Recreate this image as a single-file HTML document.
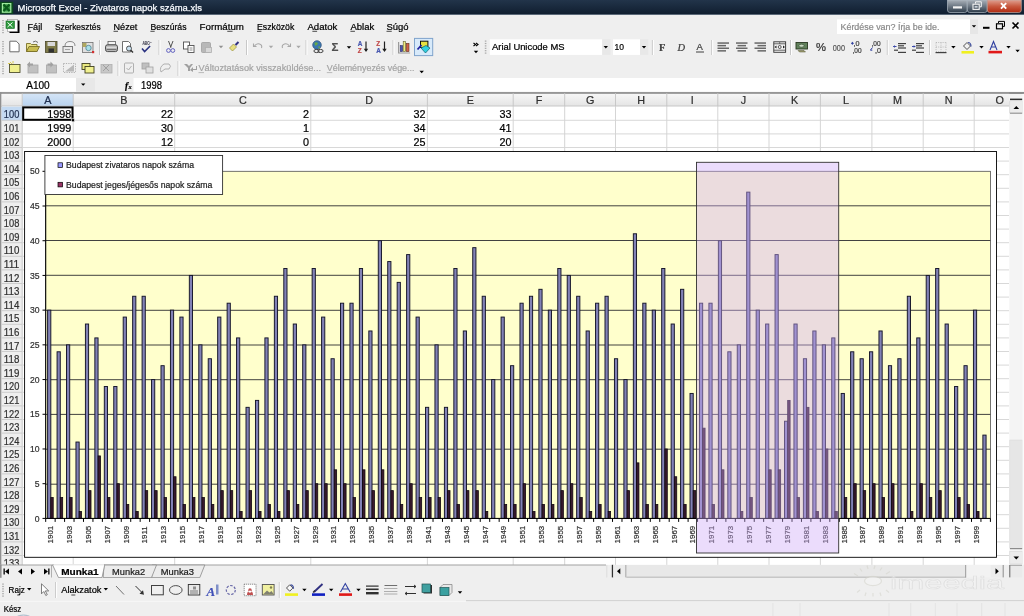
<!DOCTYPE html>
<html><head><meta charset="utf-8">
<style>
*{margin:0;padding:0;box-sizing:border-box}
html,body{width:1024px;height:616px;overflow:hidden;background:#efefef;font-family:"Liberation Sans", sans-serif;}
</style></head><body>
<svg width="1024" height="616" style="position:absolute;left:0;top:0;will-change:transform" font-family="Liberation Sans, sans-serif">
<defs><linearGradient id="tb" x1="0" y1="0" x2="0" y2="1"><stop offset="0" stop-color="#22344a"/><stop offset="1" stop-color="#0f1d2e"/></linearGradient><linearGradient id="wb" x1="0" y1="0" x2="0" y2="1"><stop offset="0" stop-color="#a9b0b8"/><stop offset="0.5" stop-color="#6d7884"/><stop offset="1" stop-color="#2c3a48"/></linearGradient><linearGradient id="wc" x1="0" y1="0" x2="0" y2="1"><stop offset="0" stop-color="#e0a090"/><stop offset="0.5" stop-color="#c85a40"/><stop offset="1" stop-color="#b02a10"/></linearGradient></defs>
<rect x="0" y="0" width="1024" height="15" fill="url(#tb)" />
<rect x="0" y="14" width="1024" height="1" fill="#5a6878" />
<rect x="0" y="1.8" width="13.2" height="12" fill="#0a4a1c" />
<rect x="1.8" y="3" width="9.6" height="9.8" fill="#a0eca0" />
<rect x="3" y="4.2" width="7.2" height="7.4" fill="#3a9a48" />
<path d="M3.5,4.5 L9.5,11 M9.5,4.5 L3.5,11" fill="none" stroke="#0a5a1a" stroke-width="2.2" />
<text x="17.5" y="11.1" font-size="9.6" fill="#f8fbff" textLength="184.5" lengthAdjust="spacingAndGlyphs" stroke="#f8fbff" stroke-width="0.25">Microsoft Excel - Zivataros napok száma.xls</text>
<path d="M947.5,0 h19.7 v10 q0,2.5 -2.5,2.5 h-14.7 q-2.5,0 -2.5,-2.5 z" fill="url(#wb)" stroke="#b0bac4" stroke-width="0.7" />
<path d="M967.3,0 h19.9 v10 q0,2.5 -2.5,2.5 h-14.9 q-2.5,0 -2.5,-2.5 z" fill="url(#wb)" stroke="#b0bac4" stroke-width="0.7" />
<path d="M987.3,0 h34 v10 q0,2.5 -2.5,2.5 h-29 q-2.5,0 -2.5,-2.5 z" fill="url(#wc)" stroke="#c0a8a0" stroke-width="0.7" />
<rect x="953" y="6.3" width="9" height="2.2" fill="#f4f4f4" />
<path d="M975.5,3.6 v-1.8 h5.8 v5 h-1.6" fill="none" stroke="#f4f4f4" stroke-width="1" />
<rect x="973" y="4.2" width="6.2" height="5.2" fill="#5a6470" stroke="#f4f4f4" stroke-width="1.1" />
<rect x="974.6" y="5.9" width="3" height="1.8" fill="#c8d0d8" />
<path d="M1001,3.2 l5.2,5.4 M1006.2,3.2 l-5.2,5.4" fill="none" stroke="#fff" stroke-width="1.9" />
<rect x="0" y="15" width="1024" height="63" fill="#efefef" />
<rect x="2.2" y="20" width="1.6" height="1.2" fill="#a8a8a8" /><rect x="2.2" y="22.4" width="1.6" height="1.2" fill="#a8a8a8" /><rect x="2.2" y="24.799999999999997" width="1.6" height="1.2" fill="#a8a8a8" /><rect x="2.2" y="27.199999999999996" width="1.6" height="1.2" fill="#a8a8a8" /><rect x="2.2" y="29.599999999999994" width="1.6" height="1.2" fill="#a8a8a8" /><rect x="2.2" y="31.999999999999993" width="1.6" height="1.2" fill="#a8a8a8" />
<rect x="9.5" y="20.5" width="10" height="12.5" fill="#000" />
<rect x="7.5" y="19.5" width="10" height="12" fill="#fff" stroke="#909090" stroke-width="0.6" />
<rect x="6" y="21" width="8.5" height="7.5" fill="#2d9a3c" stroke="#1a6a28" stroke-width="0.6" />
<path d="M7.5,22.5 l5,4.5 M12.5,22.5 l-5,4.5" fill="none" stroke="#fff" stroke-width="1" />
<text x="27.5" y="29.8" font-size="9.4" fill="#000" textLength="14.7" lengthAdjust="spacingAndGlyphs"  stroke="#000" stroke-width="0.22">Fájl</text>
<line x1="27.5" y1="31.3" x2="30.99125" y2="31.3" stroke="#000" stroke-width="0.7" />
<text x="54.9" y="29.8" font-size="9.4" fill="#000" textLength="45.7" lengthAdjust="spacingAndGlyphs"  stroke="#000" stroke-width="0.22">Szerkesztés</text>
<line x1="59.054545454545455" y1="31.3" x2="63.001363636363635" y2="31.3" stroke="#000" stroke-width="0.7" />
<text x="113.5" y="29.8" font-size="9.4" fill="#000" textLength="23.8" lengthAdjust="spacingAndGlyphs"  stroke="#000" stroke-width="0.22">Nézet</text>
<line x1="113.5" y1="31.3" x2="118.022" y2="31.3" stroke="#000" stroke-width="0.7" />
<text x="150.4" y="29.8" font-size="9.4" fill="#000" textLength="36.1" lengthAdjust="spacingAndGlyphs"  stroke="#000" stroke-width="0.22">Beszúrás</text>
<line x1="150.4" y1="31.3" x2="154.68687500000001" y2="31.3" stroke="#000" stroke-width="0.7" />
<text x="199.6" y="29.8" font-size="9.4" fill="#000" textLength="44.3" lengthAdjust="spacingAndGlyphs"  stroke="#000" stroke-width="0.22">Formátum</text>
<line x1="227.2875" y1="31.3" x2="232.548125" y2="31.3" stroke="#000" stroke-width="0.7" />
<text x="257" y="29.8" font-size="9.4" fill="#000" textLength="37.3" lengthAdjust="spacingAndGlyphs"  stroke="#000" stroke-width="0.22">Eszközök</text>
<line x1="257.0" y1="31.3" x2="261.429375" y2="31.3" stroke="#000" stroke-width="0.7" />
<text x="307.4" y="29.8" font-size="9.4" fill="#000" textLength="29.9" lengthAdjust="spacingAndGlyphs"  stroke="#000" stroke-width="0.22">Adatok</text>
<line x1="312.3833333333333" y1="31.3" x2="317.1175" y2="31.3" stroke="#000" stroke-width="0.7" />
<text x="350.4" y="29.8" font-size="9.4" fill="#000" textLength="23.8" lengthAdjust="spacingAndGlyphs"  stroke="#000" stroke-width="0.22">Ablak</text>
<line x1="350.4" y1="31.3" x2="354.92199999999997" y2="31.3" stroke="#000" stroke-width="0.7" />
<text x="386.5" y="29.8" font-size="9.4" fill="#000" textLength="22.1" lengthAdjust="spacingAndGlyphs"  stroke="#000" stroke-width="0.22">Súgó</text>
<line x1="386.5" y1="31.3" x2="391.74875000000003" y2="31.3" stroke="#000" stroke-width="0.7" />
<rect x="837" y="19.4" width="133" height="14.6" fill="#fff" />
<rect x="970" y="19.4" width="8" height="14.6" fill="#e6e6e6" />
<path d="M971.8,25.2 h4.4 l-2.2,2.4 z" fill="#000" />
<text x="840.5" y="29.5" font-size="9.2" fill="#8a8a8a" textLength="99" lengthAdjust="spacingAndGlyphs"  stroke="#8a8a8a" stroke-width="0.22">Kérdése van? Írja be ide.</text>
<rect x="983" y="26.8" width="6.5" height="2" fill="#000" />
<rect x="996.5" y="23.8" width="6" height="5" fill="none" stroke="#000" stroke-width="1.2" />
<path d="M998.5,23 v-1.6 h6 v5 h-1.6" fill="none" stroke="#000" stroke-width="1" />
<path d="M1012.5,22.5 l6,6 M1018.5,22.5 l-6,6" fill="none" stroke="#000" stroke-width="1.6" />
<rect x="2.2" y="41" width="1.6" height="1.2" fill="#a8a8a8" /><rect x="2.2" y="43.4" width="1.6" height="1.2" fill="#a8a8a8" /><rect x="2.2" y="45.8" width="1.6" height="1.2" fill="#a8a8a8" /><rect x="2.2" y="48.199999999999996" width="1.6" height="1.2" fill="#a8a8a8" /><rect x="2.2" y="50.599999999999994" width="1.6" height="1.2" fill="#a8a8a8" /><rect x="2.2" y="52.99999999999999" width="1.6" height="1.2" fill="#a8a8a8" />
<path d="M9.8,41.2 h6.5 l2.8,2.8 v7.8 h-9.3 z" fill="#fff" stroke="#6a6a6a" stroke-width="1" />
<path d="M26.5,43.5 h4 l1,1 h5.5 v7 h-10.5 z" fill="#e8e08a" stroke="#7a7028" stroke-width="0.9" />
<path d="M26.5,51.5 l2.5,-5 h10.5 l-2.5,5 z" fill="#c8bc50" stroke="#7a7028" stroke-width="0.9" />
<path d="M33,42 q2.5,-2 5,0.5" fill="none" stroke="#606060" stroke-width="0.9" />
<rect x="45.5" y="41.5" width="11.5" height="11" fill="#7e7a48" stroke="#4a4828" stroke-width="0.8" />
<rect x="47.5" y="42" width="7.5" height="4" fill="#d8d8d8" />
<rect x="48.5" y="48.5" width="5.5" height="4" fill="#303030" />
<path d="M65,46 q0,-4.5 5,-4.5 q5,0 5,4.5" fill="#f4f4f4" stroke="#808080" stroke-width="0.9" />
<rect x="63" y="46.5" width="9.5" height="6" fill="#e8e8e8" stroke="#707070" stroke-width="0.9" />
<line x1="65" y1="49.5" x2="70" y2="49.5" stroke="#909090" stroke-width="0.8" />
<rect x="82.5" y="42.5" width="10.5" height="10" fill="#e0e0e0" stroke="#707070" stroke-width="0.8" />
<rect x="82.5" y="43" width="4" height="4" fill="#b0a860" />
<path d="M88.5,48 m-2.7,0 a2.7,2.7 0 1,0 5.4,0 a2.7,2.7 0 1,0 -5.4,0" fill="#a8e0e8" stroke="#5a8a98" stroke-width="0.9" />
<rect x="92" y="51" width="2.2" height="2.2" fill="#d03030" />
<line x1="99.5" y1="40" x2="99.5" y2="55" stroke="#c8c8c8" stroke-width="1" /><line x1="100.5" y1="40" x2="100.5" y2="55" stroke="#ffffff" stroke-width="1" />
<rect x="108" y="41.5" width="7.5" height="3.5" fill="#f4f4f4" stroke="#606060" stroke-width="0.8" />
<rect x="105.5" y="44.8" width="12" height="6.8" fill="#b8b8b8" stroke="#404040" stroke-width="0.9" rx="2"/>
<line x1="106.5" y1="47.3" x2="116.5" y2="47.3" stroke="#f0f0f0" stroke-width="0.8" />
<line x1="106.5" y1="49.5" x2="116.5" y2="49.5" stroke="#606060" stroke-width="0.8" />
<path d="M122.5,41.5 h6 l2,2 v8.5 h-8 z" fill="#fff" stroke="#606060" stroke-width="0.9" />
<path d="M129,48.5 m-2.5,0 a2.5,2.5 0 1,0 5,0 a2.5,2.5 0 1,0 -5,0" fill="#c8e0f0" stroke="#404040" stroke-width="0.9" />
<line x1="130.8" y1="50.3" x2="133" y2="52.5" stroke="#303030" stroke-width="1.4" />
<text x="142.5" y="45.3" font-size="5.2" fill="#505060" font-weight="bold" textLength="7" lengthAdjust="spacingAndGlyphs"  stroke="#505060" stroke-width="0.22">ABC</text>
<path d="M149,43.5 q1.5,-1.5 2.5,-1" fill="none" stroke="#606070" stroke-width="0.8" />
<path d="M142,48.5 l2.6,3 l5.5,-5.5" fill="none" stroke="#283080" stroke-width="1.6" />
<line x1="159" y1="40" x2="159" y2="55" stroke="#c8c8c8" stroke-width="1" /><line x1="160" y1="40" x2="160" y2="55" stroke="#ffffff" stroke-width="1" />
<path d="M168.5,41 l2.5,6.5 M173,41 l-2.5,6.5" fill="none" stroke="#404040" stroke-width="0.9" />
<circle cx="168.5" cy="50.5" r="1.9" fill="none" stroke="#6060c0" stroke-width="1"/>
<circle cx="172.8" cy="50.5" r="1.9" fill="none" stroke="#6060c0" stroke-width="1"/>
<rect x="183.5" y="42" width="6" height="7" fill="#fff" stroke="#505050" stroke-width="0.9" />
<rect x="188" y="45.5" width="6" height="7" fill="#fff" stroke="#505050" stroke-width="0.9" />
<line x1="189.5" y1="48" x2="192.5" y2="48" stroke="#707070" stroke-width="0.8" />
<line x1="189.5" y1="50" x2="192.5" y2="50" stroke="#707070" stroke-width="0.8" />
<rect x="201.5" y="42.5" width="9" height="10" fill="#b8b8b8" stroke="#a0a0a0" stroke-width="0.8" rx="1"/>
<rect x="205.5" y="47.5" width="6" height="5" fill="#d8d8d8" stroke="#b0b0b0" stroke-width="0.8" />
<path d="M218.8,45.8 h4.4 l-2.2,2.4 z" fill="#909090" />
<path d="M229.5,48 l4,-4 l3,3 l-4,4 z" fill="#e8e080" stroke="#a09848" stroke-width="0.8" />
<path d="M235.5,45 l3,-3" fill="none" stroke="#303080" stroke-width="2" />
<line x1="246.5" y1="40" x2="246.5" y2="55" stroke="#c8c8c8" stroke-width="1" /><line x1="247.5" y1="40" x2="247.5" y2="55" stroke="#ffffff" stroke-width="1" />
<path d="M254.5,46 q2,-3 5,-2 q3,1 2,4" fill="none" stroke="#a8a8a8" stroke-width="1.1" />
<path d="M253.5,43.5 v3 h3" fill="none" stroke="#a8a8a8" stroke-width="1.1" />
<path d="M268.8,45.8 h4.4 l-2.2,2.4 z" fill="#a8a8a8" />
<path d="M289.5,46 q-2,-3 -5,-2 q-3,1 -2,4" fill="none" stroke="#a8a8a8" stroke-width="1.1" />
<path d="M290.5,43.5 v3 h-3" fill="none" stroke="#a8a8a8" stroke-width="1.1" />
<path d="M296.3,45.8 h4.4 l-2.2,2.4 z" fill="#a8a8a8" />
<line x1="306" y1="40" x2="306" y2="55" stroke="#c8c8c8" stroke-width="1" /><line x1="307" y1="40" x2="307" y2="55" stroke="#ffffff" stroke-width="1" />
<circle cx="317" cy="45" r="4.3" fill="#3a78b0" stroke="#30507a" stroke-width="0.7"/>
<path d="M314.5,43 q2,-1.5 3.5,0.5 q-0.5,2 -3,2.2 z M318.5,46 q2,0 1.5,2 l-1.5,0.5 z" fill="#68a848" />
<ellipse cx="316.5" cy="51" rx="2.6" ry="1.6" fill="none" stroke="#404040" stroke-width="1"/>
<ellipse cx="320.5" cy="51" rx="2.6" ry="1.6" fill="none" stroke="#404040" stroke-width="1"/>
<text x="331.5" y="51" font-size="11.5" fill="#505050" font-weight="bold"  stroke="#505050" stroke-width="0.22">Σ</text>
<path d="M346.8,46.3 h4.4 l-2.2,2.4 z" fill="#000" />
<text x="357.8" y="46.3" font-size="6.4" fill="#4858b0" font-weight="bold"  stroke="#4858b0" stroke-width="0.22">A</text>
<text x="357.8" y="52.8" font-size="6.4" fill="#c04848" font-weight="bold"  stroke="#c04848" stroke-width="0.22">Z</text>
<path d="M366,41.5 v9.5" fill="none" stroke="#202020" stroke-width="1.2" />
<path d="M363.8,48.8 h4.4 l-2.2,3.2 z" fill="#202020" />
<text x="376.2" y="46.3" font-size="6.4" fill="#c04848" font-weight="bold"  stroke="#c04848" stroke-width="0.22">Z</text>
<text x="376.2" y="52.8" font-size="6.4" fill="#4858b0" font-weight="bold"  stroke="#4858b0" stroke-width="0.22">A</text>
<path d="M384.5,41.5 v9.5" fill="none" stroke="#202020" stroke-width="1.2" />
<path d="M382.3,48.8 h4.4 l-2.2,3.2 z" fill="#202020" />
<line x1="393" y1="40" x2="393" y2="55" stroke="#c8c8c8" stroke-width="1" /><line x1="394" y1="40" x2="394" y2="55" stroke="#ffffff" stroke-width="1" />
<path d="M398.6,42 v11 h11.5" fill="none" stroke="#9a9a9a" stroke-width="1.2" />
<rect x="400.2" y="45.6" width="2.4" height="6" fill="#4a50b0" stroke="#303060" stroke-width="0.6" />
<rect x="403.2" y="41.6" width="2.4" height="10" fill="#f0ec80" stroke="#606030" stroke-width="0.6" />
<rect x="406.2" y="43.4" width="2.8" height="8.2" fill="#d06048" stroke="#603020" stroke-width="0.6" />
<rect x="414.5" y="38.4" width="18.2" height="17.2" fill="#d8eafa" stroke="#80a4cc" stroke-width="1" />
<rect x="420.5" y="41.2" width="7.4" height="6.3" fill="#e8e040" stroke="#101010" stroke-width="1" />
<path d="M421,48 l5,-2.5 l4,2.5 l-4.5,5 z" fill="#30d0e0" stroke="#106070" stroke-width="0.7" />
<path d="M417.5,49.5 l4,-4.5" fill="none" stroke="#2020a0" stroke-width="1.8" />
<path d="M473.5,43 l2,1.5 l-2,1.5 M476,43 l2,1.5 l-2,1.5" fill="none" stroke="#000" stroke-width="1.1" />
<path d="M473.8,50.8 h4.4 l-2.2,2.4 z" fill="#000" />
<rect x="484.8" y="40.5" width="1.6" height="1.2" fill="#a8a8a8" /><rect x="484.8" y="42.9" width="1.6" height="1.2" fill="#a8a8a8" /><rect x="484.8" y="45.3" width="1.6" height="1.2" fill="#a8a8a8" /><rect x="484.8" y="47.699999999999996" width="1.6" height="1.2" fill="#a8a8a8" /><rect x="484.8" y="50.099999999999994" width="1.6" height="1.2" fill="#a8a8a8" /><rect x="484.8" y="52.49999999999999" width="1.6" height="1.2" fill="#a8a8a8" />
<rect x="489.8" y="39.3" width="112.5" height="15.6" fill="#fff" />
<rect x="602.2" y="39.3" width="8.3" height="15.6" fill="#e8e8e8" />
<path d="M603.5999999999999,46.0 h4.4 l-2.2,2.4 z" fill="#000" />
<text x="492" y="49.8" font-size="9.3" fill="#000" textLength="72.5" lengthAdjust="spacingAndGlyphs"  stroke="#000" stroke-width="0.22">Arial Unicode MS</text>
<rect x="613" y="39.3" width="27" height="15.6" fill="#fff" />
<rect x="640" y="39.3" width="8.3" height="15.6" fill="#e8e8e8" />
<path d="M641.8,46.0 h4.4 l-2.2,2.4 z" fill="#000" />
<text x="614.5" y="49.8" font-size="9.3" fill="#000" textLength="9.5" lengthAdjust="spacingAndGlyphs"  stroke="#000" stroke-width="0.22">10</text>
<line x1="652.4" y1="40" x2="652.4" y2="55" stroke="#c8c8c8" stroke-width="1" /><line x1="653.4" y1="40" x2="653.4" y2="55" stroke="#ffffff" stroke-width="1" />
<text x="659" y="51" font-size="10.5" fill="#404040" font-weight="bold" font-family="Liberation Serif, serif" stroke="#404040" stroke-width="0.22">F</text>
<text x="677.5" y="51" font-size="10.5" fill="#404040" font-family="Liberation Serif, serif" font-style="italic" stroke="#404040" stroke-width="0.22">D</text>
<text x="696.5" y="50" font-size="9.5" fill="#404040"  stroke="#404040" stroke-width="0.22">A</text>
<line x1="696" y1="52" x2="704" y2="52" stroke="#404040" stroke-width="1" />
<line x1="711.7" y1="40" x2="711.7" y2="55" stroke="#c8c8c8" stroke-width="1" /><line x1="712.7" y1="40" x2="712.7" y2="55" stroke="#ffffff" stroke-width="1" />
<rect x="717.5" y="42.3" width="11.5" height="1.5" fill="#686868" /><rect x="717.5" y="44.9" width="8.5" height="1.5" fill="#686868" /><rect x="717.5" y="47.5" width="11.5" height="1.5" fill="#686868" /><rect x="717.5" y="50.099999999999994" width="8.5" height="1.5" fill="#686868" />
<rect x="736" y="42.3" width="11.5" height="1.5" fill="#686868" /><rect x="737.5" y="44.9" width="8.5" height="1.5" fill="#686868" /><rect x="736" y="47.5" width="11.5" height="1.5" fill="#686868" /><rect x="737.5" y="50.099999999999994" width="8.5" height="1.5" fill="#686868" />
<rect x="754.5" y="42.3" width="11.5" height="1.5" fill="#686868" /><rect x="757.5" y="44.9" width="8.5" height="1.5" fill="#686868" /><rect x="754.5" y="47.5" width="11.5" height="1.5" fill="#686868" /><rect x="757.5" y="50.099999999999994" width="8.5" height="1.5" fill="#686868" />
<rect x="773.8" y="41.8" width="11.8" height="10.5" fill="#f4f4f4" stroke="#404040" stroke-width="1" />
<line x1="773.8" y1="43.8" x2="785.6" y2="43.8" stroke="#505050" stroke-width="0.9" />
<line x1="773.8" y1="50.2" x2="785.6" y2="50.2" stroke="#505050" stroke-width="0.9" />
<line x1="779.7" y1="42" x2="779.7" y2="44" stroke="#505050" stroke-width="0.8" />
<path d="M774.5,47 l2,-1.6 v3.2 z M785,47 l-2,-1.6 v3.2 z" fill="#202020" />
<circle cx="779.7" cy="47" r="1.5" fill="none" stroke="#303030" stroke-width="0.8"/>
<line x1="790.5" y1="40" x2="790.5" y2="55" stroke="#c8c8c8" stroke-width="1" /><line x1="791.5" y1="40" x2="791.5" y2="55" stroke="#ffffff" stroke-width="1" />
<rect x="796" y="42.5" width="11.5" height="6.5" fill="#60805a" stroke="#283820" stroke-width="0.9" />
<ellipse cx="801.5" cy="45.7" rx="2.6" ry="1.5" fill="#c8d8c0" stroke="#304830" stroke-width="0.6"/>
<path d="M798,50.5 h6 l1.5,1.5 h-6 z" fill="#a0a070" stroke="#505030" stroke-width="0.5" />
<text x="816" y="51.3" font-size="11" fill="#303030" textLength="10" lengthAdjust="spacingAndGlyphs"  stroke="#303030" stroke-width="0.22">%</text>
<text x="832.8" y="51" font-size="8.6" fill="#585858" textLength="12.2" lengthAdjust="spacingAndGlyphs"  stroke="#585858" stroke-width="0.22">000</text>
<text x="853.5" y="46.3" font-size="7" fill="#404040" textLength="6" lengthAdjust="spacingAndGlyphs"  stroke="#404040" stroke-width="0.22">,0</text>
<text x="852.5" y="52.6" font-size="7" fill="#404040" textLength="9" lengthAdjust="spacingAndGlyphs"  stroke="#404040" stroke-width="0.22">,00</text>
<path d="M851,43.3 h2.8 M852.4,41.9 v2.8" fill="none" stroke="#3040a0" stroke-width="1" />
<text x="871.5" y="46.3" font-size="7" fill="#404040" textLength="9" lengthAdjust="spacingAndGlyphs"  stroke="#404040" stroke-width="0.22">,00</text>
<text x="875" y="52.6" font-size="7" fill="#404040" textLength="6" lengthAdjust="spacingAndGlyphs"  stroke="#404040" stroke-width="0.22">,0</text>
<path d="M872.5,47.5 l-2,2.5 M870.3,50.2 h2" fill="none" stroke="#3040a0" stroke-width="1" />
<line x1="887.3" y1="40" x2="887.3" y2="55" stroke="#c8c8c8" stroke-width="1" /><line x1="888.3" y1="40" x2="888.3" y2="55" stroke="#ffffff" stroke-width="1" />
<rect x="898" y="43.0" width="8" height="1.2" fill="#404040" /><rect x="898" y="45.2" width="6" height="1.2" fill="#404040" /><rect x="898" y="47.4" width="8" height="1.2" fill="#404040" /><rect x="894" y="49.6" width="4" height="1.2" fill="#404040" /><rect x="898" y="51.8" width="8" height="1.2" fill="#404040" />
<path d="M893.5,46.5 h3 M894.5,45.5 l-1,1 l1,1" fill="none" stroke="#2838a0" stroke-width="0.9" />
<rect x="916" y="43.0" width="8" height="1.2" fill="#404040" /><rect x="916" y="45.2" width="6" height="1.2" fill="#404040" /><rect x="916" y="47.4" width="8" height="1.2" fill="#404040" /><rect x="912" y="49.6" width="4" height="1.2" fill="#404040" /><rect x="916" y="51.8" width="8" height="1.2" fill="#404040" />
<path d="M912,46.5 h3 M914,45.5 l1,1 l-1,1" fill="none" stroke="#2838a0" stroke-width="0.9" />
<line x1="929.5" y1="40" x2="929.5" y2="55" stroke="#c8c8c8" stroke-width="1" /><line x1="930.5" y1="40" x2="930.5" y2="55" stroke="#ffffff" stroke-width="1" />
<line x1="936" y1="42.5" x2="946" y2="42.5" stroke="#a8a8a8" stroke-width="0.7" stroke-dasharray="1,1.2"/>
<line x1="936" y1="47" x2="946" y2="47" stroke="#a8a8a8" stroke-width="0.7" stroke-dasharray="1,1.2"/>
<line x1="936" y1="51.5" x2="946" y2="51.5" stroke="#a8a8a8" stroke-width="0.7" stroke-dasharray="1,1.2"/>
<line x1="936" y1="42.5" x2="936" y2="51.5" stroke="#a8a8a8" stroke-width="0.7" stroke-dasharray="1,1.2"/>
<line x1="941" y1="42.5" x2="941" y2="51.5" stroke="#a8a8a8" stroke-width="0.7" stroke-dasharray="1,1.2"/>
<line x1="946" y1="42.5" x2="946" y2="51.5" stroke="#a8a8a8" stroke-width="0.7" stroke-dasharray="1,1.2"/>
<line x1="935.5" y1="52.6" x2="946.5" y2="52.6" stroke="#404040" stroke-width="1.2" />
<path d="M951.1999999999999,46.0 h4.4 l-2.2,2.4 z" fill="#000" />
<path d="M963.5,46 l3.5,-3.5 l3.5,3.5 l-3.5,3.5 z" fill="#f0f0f0" stroke="#404040" stroke-width="0.9" />
<path d="M968,42.5 q3,0 3,4" fill="none" stroke="#4050a0" stroke-width="1.2" />
<rect x="961.5" y="51" width="12.5" height="2.6" fill="#f0f020" />
<path d="M979.3,46.0 h4.4 l-2.2,2.4 z" fill="#000" />
<path d="M990,50 l3.5,-8.5 l3.5,8.5 M991.5,47 h4" fill="none" stroke="#3040a0" stroke-width="1.1" />
<rect x="988.5" y="50.8" width="13.5" height="2.6" fill="#e01818" />
<path d="M1006.3,46.0 h4.4 l-2.2,2.4 z" fill="#000" />
<path d="M1015.4,49.8 h4.4 l-2.2,2.4 z" fill="#000" />
<rect x="2.2" y="61" width="1.6" height="1.2" fill="#a8a8a8" /><rect x="2.2" y="63.4" width="1.6" height="1.2" fill="#a8a8a8" /><rect x="2.2" y="65.8" width="1.6" height="1.2" fill="#a8a8a8" /><rect x="2.2" y="68.2" width="1.6" height="1.2" fill="#a8a8a8" /><rect x="2.2" y="70.60000000000001" width="1.6" height="1.2" fill="#a8a8a8" /><rect x="2.2" y="73.00000000000001" width="1.6" height="1.2" fill="#a8a8a8" />
<rect x="9.5" y="64.5" width="10.5" height="8" fill="#f0f090" stroke="#505030" stroke-width="0.9" />
<path d="M10,62 l2,2 M13,61 v2.5 M8,63.5 h2" fill="none" stroke="#d8c840" stroke-width="0.9" />
<rect x="28" y="65" width="10" height="8" fill="#c0c0c0" stroke="#a8a8a8" stroke-width="0.8" />
<path d="M27,64.5 l3,-3 v2 h3 v2 h-3 v2 z" fill="#a0a0a0" />
<rect x="46.5" y="65" width="10" height="8" fill="#c0c0c0" stroke="#a8a8a8" stroke-width="0.8" />
<path d="M53.5,64.5 l-3,-3 v2 h-3 v2 h3 v2 z" fill="#a0a0a0" />
<rect x="63.5" y="63.5" width="12" height="9" fill="none" stroke="#a8a8a8" stroke-width="0.9" stroke-dasharray="1.2,1.2"/>
<path d="M65,71.5 l9,-7 v7 z" fill="#b8b8b8" />
<rect x="82" y="63.5" width="8" height="6" fill="#e8e880" stroke="#404020" stroke-width="0.9" />
<rect x="85" y="66.5" width="9" height="6.5" fill="#f0f090" stroke="#404020" stroke-width="0.9" />
<rect x="101" y="64.5" width="11" height="8.5" fill="#c8c8c8" stroke="#b0b0b0" stroke-width="0.8" />
<path d="M103,65 l6,6 M109,65 l-6,6" fill="none" stroke="#a0a0a0" stroke-width="1" />
<line x1="118" y1="61" x2="118" y2="76" stroke="#c8c8c8" stroke-width="1" /><line x1="119" y1="61" x2="119" y2="76" stroke="#ffffff" stroke-width="1" />
<rect x="124.5" y="63" width="9" height="10" fill="none" stroke="#a8a8a8" stroke-width="0.9" rx="1"/>
<path d="M126.5,68 l2,2 l3,-4" fill="none" stroke="#a8a8a8" stroke-width="0.9" />
<rect x="142" y="63" width="7" height="6" fill="#c0c0c0" stroke="#a0a0a0" stroke-width="0.8" />
<rect x="146" y="67" width="7" height="6" fill="#e0e0e0" stroke="#a0a0a0" stroke-width="0.8" />
<path d="M161,72 q-2,-5 3,-8 h5 q3,2 0,5 h-4 z" fill="none" stroke="#a8a8a8" stroke-width="0.9" />
<line x1="178" y1="61" x2="178" y2="76" stroke="#c8c8c8" stroke-width="1" /><line x1="179" y1="61" x2="179" y2="76" stroke="#ffffff" stroke-width="1" />
<path d="M184,64 l3,0 l2,2 l2,-2 l2,0 l-3,4 v3 h-2 v-3 z" fill="#a0a0a0" />
<path d="M190,70 l3,-3 v2 h3 v-3 h1 v4 h-4 v2 z" fill="#a0a0a0" />
<text x="198.5" y="70.9" font-size="9.3" fill="#a4a4a4" textLength="122.5" lengthAdjust="spacingAndGlyphs"  stroke="#a4a4a4" stroke-width="0.22">Változtatások visszaküldése...</text>
<line x1="198.5" y1="72.6" x2="204" y2="72.6" stroke="#a4a4a4" stroke-width="0.7" />
<text x="326.8" y="70.9" font-size="9.3" fill="#a4a4a4" textLength="87.7" lengthAdjust="spacingAndGlyphs"  stroke="#a4a4a4" stroke-width="0.22">Véleményezés vége...</text>
<line x1="326.8" y1="72.6" x2="332.3" y2="72.6" stroke="#a4a4a4" stroke-width="0.7" />
<path d="M419.5,70.8 h4.4 l-2.2,2.4 z" fill="#000" />
<rect x="0" y="77.6" width="1024" height="15" fill="#efefef" />
<rect x="0" y="78" width="76" height="13.6" fill="#fff" />
<rect x="76" y="78" width="19" height="13.6" fill="#e8e8e8" />
<path d="M81.0,83.39999999999999 h4.4 l-2.2,2.4 z" fill="#000" />
<rect x="133.5" y="78" width="890.5" height="13.6" fill="#fff" />
<text x="26.2" y="89.2" font-size="10" fill="#000" textLength="23.5" lengthAdjust="spacingAndGlyphs"  stroke="#000" stroke-width="0.22">A100</text>
<text x="141" y="89.2" font-size="10" fill="#000" textLength="21" lengthAdjust="spacingAndGlyphs"  stroke="#000" stroke-width="0.22">1998</text>
<text x="125" y="89" font-size="9.5" fill="#000" font-weight="bold" font-style="italic" font-family="Liberation Serif, serif" stroke="#000" stroke-width="0.22">f</text>
<text x="128.5" y="89" font-size="6.5" fill="#000" font-weight="bold" font-style="italic" font-family="Liberation Serif, serif" stroke="#000" stroke-width="0.22">x</text>
<rect x="0" y="92" width="1024" height="473" fill="#fff" />
<rect x="0" y="92.1" width="1024" height="1.8" fill="#8c8c8c" />
<rect x="0" y="92" width="1.6" height="473" fill="#909090" />
<defs><linearGradient id="ch" x1="0" y1="0" x2="0" y2="1"><stop offset="0" stop-color="#f6f6f6"/><stop offset="1" stop-color="#e4e4e4"/></linearGradient><linearGradient id="chs" x1="0" y1="0" x2="0" y2="1"><stop offset="0" stop-color="#d4e4f6"/><stop offset="1" stop-color="#b8d2ee"/></linearGradient></defs>
<rect x="1.6" y="93.9" width="1008" height="12.3" fill="url(#ch)" />
<rect x="22.5" y="93.9" width="50.7" height="12.3" fill="url(#chs)" />
<line x1="1.6" y1="106.0" x2="1009" y2="106.0" stroke="#c0c0c0" stroke-width="0.8" />
<rect x="1.6" y="106.7" width="21" height="460" fill="#eeeeee" />
<rect x="1.6" y="106.7" width="21" height="13.6" fill="#c4daf2" />
<line x1="22.2" y1="93" x2="22.2" y2="565" stroke="#c0c0c0" stroke-width="0.8" />
<line x1="73.2" y1="93" x2="73.2" y2="106.7" stroke="#c4c4c4" stroke-width="0.9" />
<line x1="73.2" y1="106.7" x2="73.2" y2="565" stroke="#d0d0d0" stroke-width="0.9" />
<line x1="174.7" y1="93" x2="174.7" y2="106.7" stroke="#c4c4c4" stroke-width="0.9" />
<line x1="174.7" y1="106.7" x2="174.7" y2="565" stroke="#d0d0d0" stroke-width="0.9" />
<line x1="310.8" y1="93" x2="310.8" y2="106.7" stroke="#c4c4c4" stroke-width="0.9" />
<line x1="310.8" y1="106.7" x2="310.8" y2="565" stroke="#d0d0d0" stroke-width="0.9" />
<line x1="427.4" y1="93" x2="427.4" y2="106.7" stroke="#c4c4c4" stroke-width="0.9" />
<line x1="427.4" y1="106.7" x2="427.4" y2="565" stroke="#d0d0d0" stroke-width="0.9" />
<line x1="513.2" y1="93" x2="513.2" y2="106.7" stroke="#c4c4c4" stroke-width="0.9" />
<line x1="513.2" y1="106.7" x2="513.2" y2="565" stroke="#d0d0d0" stroke-width="0.9" />
<line x1="564.7" y1="93" x2="564.7" y2="106.7" stroke="#c4c4c4" stroke-width="0.9" />
<line x1="564.7" y1="106.7" x2="564.7" y2="565" stroke="#d0d0d0" stroke-width="0.9" />
<line x1="615.5" y1="93" x2="615.5" y2="106.7" stroke="#c4c4c4" stroke-width="0.9" />
<line x1="615.5" y1="106.7" x2="615.5" y2="565" stroke="#d0d0d0" stroke-width="0.9" />
<line x1="666.8" y1="93" x2="666.8" y2="106.7" stroke="#c4c4c4" stroke-width="0.9" />
<line x1="666.8" y1="106.7" x2="666.8" y2="565" stroke="#d0d0d0" stroke-width="0.9" />
<line x1="717.8" y1="93" x2="717.8" y2="106.7" stroke="#c4c4c4" stroke-width="0.9" />
<line x1="717.8" y1="106.7" x2="717.8" y2="565" stroke="#d0d0d0" stroke-width="0.9" />
<line x1="769" y1="93" x2="769" y2="106.7" stroke="#c4c4c4" stroke-width="0.9" />
<line x1="769" y1="106.7" x2="769" y2="565" stroke="#d0d0d0" stroke-width="0.9" />
<line x1="820.4" y1="93" x2="820.4" y2="106.7" stroke="#c4c4c4" stroke-width="0.9" />
<line x1="820.4" y1="106.7" x2="820.4" y2="565" stroke="#d0d0d0" stroke-width="0.9" />
<line x1="871.9" y1="93" x2="871.9" y2="106.7" stroke="#c4c4c4" stroke-width="0.9" />
<line x1="871.9" y1="106.7" x2="871.9" y2="565" stroke="#d0d0d0" stroke-width="0.9" />
<line x1="923.2" y1="93" x2="923.2" y2="106.7" stroke="#c4c4c4" stroke-width="0.9" />
<line x1="923.2" y1="106.7" x2="923.2" y2="565" stroke="#d0d0d0" stroke-width="0.9" />
<line x1="974.2" y1="93" x2="974.2" y2="106.7" stroke="#c4c4c4" stroke-width="0.9" />
<line x1="974.2" y1="106.7" x2="974.2" y2="565" stroke="#d0d0d0" stroke-width="0.9" />
<line x1="1.6" y1="120.3" x2="22.2" y2="120.3" stroke="#c8c8c8" stroke-width="0.9" />
<line x1="22.2" y1="120.3" x2="1009" y2="120.3" stroke="#d4d4d4" stroke-width="0.9" />
<line x1="1.6" y1="133.9" x2="22.2" y2="133.9" stroke="#c8c8c8" stroke-width="0.9" />
<line x1="22.2" y1="133.9" x2="1009" y2="133.9" stroke="#d4d4d4" stroke-width="0.9" />
<line x1="1.6" y1="147.5" x2="22.2" y2="147.5" stroke="#c8c8c8" stroke-width="0.9" />
<line x1="22.2" y1="147.5" x2="1009" y2="147.5" stroke="#d4d4d4" stroke-width="0.9" />
<line x1="1.6" y1="161.1" x2="22.2" y2="161.1" stroke="#c8c8c8" stroke-width="0.9" />
<line x1="22.2" y1="161.1" x2="1009" y2="161.1" stroke="#d4d4d4" stroke-width="0.9" />
<line x1="1.6" y1="174.7" x2="22.2" y2="174.7" stroke="#c8c8c8" stroke-width="0.9" />
<line x1="22.2" y1="174.7" x2="1009" y2="174.7" stroke="#d4d4d4" stroke-width="0.9" />
<line x1="1.6" y1="188.3" x2="22.2" y2="188.3" stroke="#c8c8c8" stroke-width="0.9" />
<line x1="22.2" y1="188.3" x2="1009" y2="188.3" stroke="#d4d4d4" stroke-width="0.9" />
<line x1="1.6" y1="201.9" x2="22.2" y2="201.9" stroke="#c8c8c8" stroke-width="0.9" />
<line x1="22.2" y1="201.9" x2="1009" y2="201.9" stroke="#d4d4d4" stroke-width="0.9" />
<line x1="1.6" y1="215.5" x2="22.2" y2="215.5" stroke="#c8c8c8" stroke-width="0.9" />
<line x1="22.2" y1="215.5" x2="1009" y2="215.5" stroke="#d4d4d4" stroke-width="0.9" />
<line x1="1.6" y1="229.1" x2="22.2" y2="229.1" stroke="#c8c8c8" stroke-width="0.9" />
<line x1="22.2" y1="229.1" x2="1009" y2="229.1" stroke="#d4d4d4" stroke-width="0.9" />
<line x1="1.6" y1="242.7" x2="22.2" y2="242.7" stroke="#c8c8c8" stroke-width="0.9" />
<line x1="22.2" y1="242.7" x2="1009" y2="242.7" stroke="#d4d4d4" stroke-width="0.9" />
<line x1="1.6" y1="256.3" x2="22.2" y2="256.3" stroke="#c8c8c8" stroke-width="0.9" />
<line x1="22.2" y1="256.3" x2="1009" y2="256.3" stroke="#d4d4d4" stroke-width="0.9" />
<line x1="1.6" y1="269.9" x2="22.2" y2="269.9" stroke="#c8c8c8" stroke-width="0.9" />
<line x1="22.2" y1="269.9" x2="1009" y2="269.9" stroke="#d4d4d4" stroke-width="0.9" />
<line x1="1.6" y1="283.5" x2="22.2" y2="283.5" stroke="#c8c8c8" stroke-width="0.9" />
<line x1="22.2" y1="283.5" x2="1009" y2="283.5" stroke="#d4d4d4" stroke-width="0.9" />
<line x1="1.6" y1="297.1" x2="22.2" y2="297.1" stroke="#c8c8c8" stroke-width="0.9" />
<line x1="22.2" y1="297.1" x2="1009" y2="297.1" stroke="#d4d4d4" stroke-width="0.9" />
<line x1="1.6" y1="310.7" x2="22.2" y2="310.7" stroke="#c8c8c8" stroke-width="0.9" />
<line x1="22.2" y1="310.7" x2="1009" y2="310.7" stroke="#d4d4d4" stroke-width="0.9" />
<line x1="1.6" y1="324.3" x2="22.2" y2="324.3" stroke="#c8c8c8" stroke-width="0.9" />
<line x1="22.2" y1="324.3" x2="1009" y2="324.3" stroke="#d4d4d4" stroke-width="0.9" />
<line x1="1.6" y1="337.9" x2="22.2" y2="337.9" stroke="#c8c8c8" stroke-width="0.9" />
<line x1="22.2" y1="337.9" x2="1009" y2="337.9" stroke="#d4d4d4" stroke-width="0.9" />
<line x1="1.6" y1="351.5" x2="22.2" y2="351.5" stroke="#c8c8c8" stroke-width="0.9" />
<line x1="22.2" y1="351.5" x2="1009" y2="351.5" stroke="#d4d4d4" stroke-width="0.9" />
<line x1="1.6" y1="365.09999999999997" x2="22.2" y2="365.09999999999997" stroke="#c8c8c8" stroke-width="0.9" />
<line x1="22.2" y1="365.09999999999997" x2="1009" y2="365.09999999999997" stroke="#d4d4d4" stroke-width="0.9" />
<line x1="1.6" y1="378.7" x2="22.2" y2="378.7" stroke="#c8c8c8" stroke-width="0.9" />
<line x1="22.2" y1="378.7" x2="1009" y2="378.7" stroke="#d4d4d4" stroke-width="0.9" />
<line x1="1.6" y1="392.29999999999995" x2="22.2" y2="392.29999999999995" stroke="#c8c8c8" stroke-width="0.9" />
<line x1="22.2" y1="392.29999999999995" x2="1009" y2="392.29999999999995" stroke="#d4d4d4" stroke-width="0.9" />
<line x1="1.6" y1="405.9" x2="22.2" y2="405.9" stroke="#c8c8c8" stroke-width="0.9" />
<line x1="22.2" y1="405.9" x2="1009" y2="405.9" stroke="#d4d4d4" stroke-width="0.9" />
<line x1="1.6" y1="419.5" x2="22.2" y2="419.5" stroke="#c8c8c8" stroke-width="0.9" />
<line x1="22.2" y1="419.5" x2="1009" y2="419.5" stroke="#d4d4d4" stroke-width="0.9" />
<line x1="1.6" y1="433.09999999999997" x2="22.2" y2="433.09999999999997" stroke="#c8c8c8" stroke-width="0.9" />
<line x1="22.2" y1="433.09999999999997" x2="1009" y2="433.09999999999997" stroke="#d4d4d4" stroke-width="0.9" />
<line x1="1.6" y1="446.7" x2="22.2" y2="446.7" stroke="#c8c8c8" stroke-width="0.9" />
<line x1="22.2" y1="446.7" x2="1009" y2="446.7" stroke="#d4d4d4" stroke-width="0.9" />
<line x1="1.6" y1="460.29999999999995" x2="22.2" y2="460.29999999999995" stroke="#c8c8c8" stroke-width="0.9" />
<line x1="22.2" y1="460.29999999999995" x2="1009" y2="460.29999999999995" stroke="#d4d4d4" stroke-width="0.9" />
<line x1="1.6" y1="473.9" x2="22.2" y2="473.9" stroke="#c8c8c8" stroke-width="0.9" />
<line x1="22.2" y1="473.9" x2="1009" y2="473.9" stroke="#d4d4d4" stroke-width="0.9" />
<line x1="1.6" y1="487.5" x2="22.2" y2="487.5" stroke="#c8c8c8" stroke-width="0.9" />
<line x1="22.2" y1="487.5" x2="1009" y2="487.5" stroke="#d4d4d4" stroke-width="0.9" />
<line x1="1.6" y1="501.09999999999997" x2="22.2" y2="501.09999999999997" stroke="#c8c8c8" stroke-width="0.9" />
<line x1="22.2" y1="501.09999999999997" x2="1009" y2="501.09999999999997" stroke="#d4d4d4" stroke-width="0.9" />
<line x1="1.6" y1="514.7" x2="22.2" y2="514.7" stroke="#c8c8c8" stroke-width="0.9" />
<line x1="22.2" y1="514.7" x2="1009" y2="514.7" stroke="#d4d4d4" stroke-width="0.9" />
<line x1="1.6" y1="528.3" x2="22.2" y2="528.3" stroke="#c8c8c8" stroke-width="0.9" />
<line x1="22.2" y1="528.3" x2="1009" y2="528.3" stroke="#d4d4d4" stroke-width="0.9" />
<line x1="1.6" y1="541.9" x2="22.2" y2="541.9" stroke="#c8c8c8" stroke-width="0.9" />
<line x1="22.2" y1="541.9" x2="1009" y2="541.9" stroke="#d4d4d4" stroke-width="0.9" />
<line x1="1.6" y1="555.5" x2="22.2" y2="555.5" stroke="#c8c8c8" stroke-width="0.9" />
<line x1="22.2" y1="555.5" x2="1009" y2="555.5" stroke="#d4d4d4" stroke-width="0.9" />
<line x1="1.6" y1="569.1" x2="22.2" y2="569.1" stroke="#c8c8c8" stroke-width="0.9" />
<line x1="22.2" y1="569.1" x2="1009" y2="569.1" stroke="#d4d4d4" stroke-width="0.9" />
<text x="47.9" y="103.8" font-size="10.8" fill="#203050" text-anchor="middle"  stroke="#203050" stroke-width="0.22">A</text>
<text x="123.9" y="103.8" font-size="10.8" fill="#303030" text-anchor="middle"  stroke="#303030" stroke-width="0.22">B</text>
<text x="242.8" y="103.8" font-size="10.8" fill="#303030" text-anchor="middle"  stroke="#303030" stroke-width="0.22">C</text>
<text x="369.1" y="103.8" font-size="10.8" fill="#303030" text-anchor="middle"  stroke="#303030" stroke-width="0.22">D</text>
<text x="470.3" y="103.8" font-size="10.8" fill="#303030" text-anchor="middle"  stroke="#303030" stroke-width="0.22">E</text>
<text x="539.0" y="103.8" font-size="10.8" fill="#303030" text-anchor="middle"  stroke="#303030" stroke-width="0.22">F</text>
<text x="590.1" y="103.8" font-size="10.8" fill="#303030" text-anchor="middle"  stroke="#303030" stroke-width="0.22">G</text>
<text x="641.1" y="103.8" font-size="10.8" fill="#303030" text-anchor="middle"  stroke="#303030" stroke-width="0.22">H</text>
<text x="692.3" y="103.8" font-size="10.8" fill="#303030" text-anchor="middle"  stroke="#303030" stroke-width="0.22">I</text>
<text x="743.4" y="103.8" font-size="10.8" fill="#303030" text-anchor="middle"  stroke="#303030" stroke-width="0.22">J</text>
<text x="794.7" y="103.8" font-size="10.8" fill="#303030" text-anchor="middle"  stroke="#303030" stroke-width="0.22">K</text>
<text x="846.1" y="103.8" font-size="10.8" fill="#303030" text-anchor="middle"  stroke="#303030" stroke-width="0.22">L</text>
<text x="897.5" y="103.8" font-size="10.8" fill="#303030" text-anchor="middle"  stroke="#303030" stroke-width="0.22">M</text>
<text x="948.7" y="103.8" font-size="10.8" fill="#303030" text-anchor="middle"  stroke="#303030" stroke-width="0.22">N</text>
<text x="999.8" y="103.8" font-size="10.8" fill="#303030" text-anchor="middle"  stroke="#303030" stroke-width="0.22">O</text>
<text x="3.8" y="118.3" font-size="10.8" fill="#203050" textLength="15.5" lengthAdjust="spacingAndGlyphs"  stroke="#203050" stroke-width="0.22">100</text>
<text x="3.8" y="131.9" font-size="10.8" fill="#303030" textLength="15.5" lengthAdjust="spacingAndGlyphs"  stroke="#303030" stroke-width="0.22">101</text>
<text x="3.8" y="145.5" font-size="10.8" fill="#303030" textLength="15.5" lengthAdjust="spacingAndGlyphs"  stroke="#303030" stroke-width="0.22">102</text>
<text x="3.8" y="159.1" font-size="10.8" fill="#303030" textLength="15.5" lengthAdjust="spacingAndGlyphs"  stroke="#303030" stroke-width="0.22">103</text>
<text x="3.8" y="172.7" font-size="10.8" fill="#303030" textLength="15.5" lengthAdjust="spacingAndGlyphs"  stroke="#303030" stroke-width="0.22">104</text>
<text x="3.8" y="186.3" font-size="10.8" fill="#303030" textLength="15.5" lengthAdjust="spacingAndGlyphs"  stroke="#303030" stroke-width="0.22">105</text>
<text x="3.8" y="199.9" font-size="10.8" fill="#303030" textLength="15.5" lengthAdjust="spacingAndGlyphs"  stroke="#303030" stroke-width="0.22">106</text>
<text x="3.8" y="213.5" font-size="10.8" fill="#303030" textLength="15.5" lengthAdjust="spacingAndGlyphs"  stroke="#303030" stroke-width="0.22">107</text>
<text x="3.8" y="227.1" font-size="10.8" fill="#303030" textLength="15.5" lengthAdjust="spacingAndGlyphs"  stroke="#303030" stroke-width="0.22">108</text>
<text x="3.8" y="240.7" font-size="10.8" fill="#303030" textLength="15.5" lengthAdjust="spacingAndGlyphs"  stroke="#303030" stroke-width="0.22">109</text>
<text x="3.8" y="254.3" font-size="10.8" fill="#303030" textLength="15.5" lengthAdjust="spacingAndGlyphs"  stroke="#303030" stroke-width="0.22">110</text>
<text x="3.8" y="267.9" font-size="10.8" fill="#303030" textLength="15.5" lengthAdjust="spacingAndGlyphs"  stroke="#303030" stroke-width="0.22">111</text>
<text x="3.8" y="281.5" font-size="10.8" fill="#303030" textLength="15.5" lengthAdjust="spacingAndGlyphs"  stroke="#303030" stroke-width="0.22">112</text>
<text x="3.8" y="295.1" font-size="10.8" fill="#303030" textLength="15.5" lengthAdjust="spacingAndGlyphs"  stroke="#303030" stroke-width="0.22">113</text>
<text x="3.8" y="308.7" font-size="10.8" fill="#303030" textLength="15.5" lengthAdjust="spacingAndGlyphs"  stroke="#303030" stroke-width="0.22">114</text>
<text x="3.8" y="322.3" font-size="10.8" fill="#303030" textLength="15.5" lengthAdjust="spacingAndGlyphs"  stroke="#303030" stroke-width="0.22">115</text>
<text x="3.8" y="335.9" font-size="10.8" fill="#303030" textLength="15.5" lengthAdjust="spacingAndGlyphs"  stroke="#303030" stroke-width="0.22">116</text>
<text x="3.8" y="349.5" font-size="10.8" fill="#303030" textLength="15.5" lengthAdjust="spacingAndGlyphs"  stroke="#303030" stroke-width="0.22">117</text>
<text x="3.8" y="363.1" font-size="10.8" fill="#303030" textLength="15.5" lengthAdjust="spacingAndGlyphs"  stroke="#303030" stroke-width="0.22">118</text>
<text x="3.8" y="376.7" font-size="10.8" fill="#303030" textLength="15.5" lengthAdjust="spacingAndGlyphs"  stroke="#303030" stroke-width="0.22">119</text>
<text x="3.8" y="390.3" font-size="10.8" fill="#303030" textLength="15.5" lengthAdjust="spacingAndGlyphs"  stroke="#303030" stroke-width="0.22">120</text>
<text x="3.8" y="403.9" font-size="10.8" fill="#303030" textLength="15.5" lengthAdjust="spacingAndGlyphs"  stroke="#303030" stroke-width="0.22">121</text>
<text x="3.8" y="417.5" font-size="10.8" fill="#303030" textLength="15.5" lengthAdjust="spacingAndGlyphs"  stroke="#303030" stroke-width="0.22">122</text>
<text x="3.8" y="431.1" font-size="10.8" fill="#303030" textLength="15.5" lengthAdjust="spacingAndGlyphs"  stroke="#303030" stroke-width="0.22">123</text>
<text x="3.8" y="444.7" font-size="10.8" fill="#303030" textLength="15.5" lengthAdjust="spacingAndGlyphs"  stroke="#303030" stroke-width="0.22">124</text>
<text x="3.8" y="458.3" font-size="10.8" fill="#303030" textLength="15.5" lengthAdjust="spacingAndGlyphs"  stroke="#303030" stroke-width="0.22">125</text>
<text x="3.8" y="471.9" font-size="10.8" fill="#303030" textLength="15.5" lengthAdjust="spacingAndGlyphs"  stroke="#303030" stroke-width="0.22">126</text>
<text x="3.8" y="485.5" font-size="10.8" fill="#303030" textLength="15.5" lengthAdjust="spacingAndGlyphs"  stroke="#303030" stroke-width="0.22">127</text>
<text x="3.8" y="499.1" font-size="10.8" fill="#303030" textLength="15.5" lengthAdjust="spacingAndGlyphs"  stroke="#303030" stroke-width="0.22">128</text>
<text x="3.8" y="512.7" font-size="10.8" fill="#303030" textLength="15.5" lengthAdjust="spacingAndGlyphs"  stroke="#303030" stroke-width="0.22">129</text>
<text x="3.8" y="526.3" font-size="10.8" fill="#303030" textLength="15.5" lengthAdjust="spacingAndGlyphs"  stroke="#303030" stroke-width="0.22">130</text>
<text x="3.8" y="539.9" font-size="10.8" fill="#303030" textLength="15.5" lengthAdjust="spacingAndGlyphs"  stroke="#303030" stroke-width="0.22">131</text>
<text x="3.8" y="553.5" font-size="10.8" fill="#303030" textLength="15.5" lengthAdjust="spacingAndGlyphs"  stroke="#303030" stroke-width="0.22">132</text>
<text x="3.8" y="567.1" font-size="10.8" fill="#303030" textLength="15.5" lengthAdjust="spacingAndGlyphs"  stroke="#303030" stroke-width="0.22">133</text>
<text x="71.4" y="118.3" font-size="10.8" fill="#000" text-anchor="end"  stroke="#000" stroke-width="0.22">1998</text>
<text x="172.89999999999998" y="118.3" font-size="10.8" fill="#000" text-anchor="end"  stroke="#000" stroke-width="0.22">22</text>
<text x="309.0" y="118.3" font-size="10.8" fill="#000" text-anchor="end"  stroke="#000" stroke-width="0.22">2</text>
<text x="425.59999999999997" y="118.3" font-size="10.8" fill="#000" text-anchor="end"  stroke="#000" stroke-width="0.22">32</text>
<text x="511.40000000000003" y="118.3" font-size="10.8" fill="#000" text-anchor="end"  stroke="#000" stroke-width="0.22">33</text>
<text x="71.4" y="131.9" font-size="10.8" fill="#000" text-anchor="end"  stroke="#000" stroke-width="0.22">1999</text>
<text x="172.89999999999998" y="131.9" font-size="10.8" fill="#000" text-anchor="end"  stroke="#000" stroke-width="0.22">30</text>
<text x="309.0" y="131.9" font-size="10.8" fill="#000" text-anchor="end"  stroke="#000" stroke-width="0.22">1</text>
<text x="425.59999999999997" y="131.9" font-size="10.8" fill="#000" text-anchor="end"  stroke="#000" stroke-width="0.22">34</text>
<text x="511.40000000000003" y="131.9" font-size="10.8" fill="#000" text-anchor="end"  stroke="#000" stroke-width="0.22">41</text>
<text x="71.4" y="145.5" font-size="10.8" fill="#000" text-anchor="end"  stroke="#000" stroke-width="0.22">2000</text>
<text x="172.89999999999998" y="145.5" font-size="10.8" fill="#000" text-anchor="end"  stroke="#000" stroke-width="0.22">12</text>
<text x="309.0" y="145.5" font-size="10.8" fill="#000" text-anchor="end"  stroke="#000" stroke-width="0.22">0</text>
<text x="425.59999999999997" y="145.5" font-size="10.8" fill="#000" text-anchor="end"  stroke="#000" stroke-width="0.22">25</text>
<text x="511.40000000000003" y="145.5" font-size="10.8" fill="#000" text-anchor="end"  stroke="#000" stroke-width="0.22">20</text>
<rect x="23.2" y="107.4" width="49.3" height="12.4" fill="none" stroke="#000" stroke-width="2" />
<rect x="71.5" y="118.8" width="3" height="3" fill="#000" stroke="#fff" stroke-width="0.6" />
<rect x="1009.3" y="93.9" width="14.7" height="471" fill="#f4f4f4" />
<rect x="1009.3" y="92.1" width="14.7" height="1.8" fill="#8c8c8c" />
<rect x="1010" y="98.6" width="12.4" height="1.5" fill="#303030" />
<rect x="1009.8" y="100.8" width="12.6" height="12.3" fill="#ececec" stroke="#c8c8c8" stroke-width="0.5" />
<line x1="1010" y1="113.2" x2="1022.4" y2="113.2" stroke="#8c8c8c" stroke-width="1" />
<path d="M1013.5,109 h5.6 l-2.8,-3 z" fill="#000" />
<rect x="1009.8" y="440" width="12.6" height="108.5" fill="#e6e6e6" stroke="#d8d8d8" stroke-width="0.5" />
<line x1="1010" y1="548.6" x2="1022.4" y2="548.6" stroke="#8c8c8c" stroke-width="1.2" />
<rect x="1009.8" y="551.5" width="12.6" height="12.5" fill="#ececec" stroke="#d0d0d0" stroke-width="0.5" />
<path d="M1013.5,556.5 h5.6 l-2.8,3 z" fill="#000" />
<rect x="1022.5" y="93.9" width="1.5" height="471" fill="#fafafa" />
<rect x="0" y="564.8" width="1024" height="13" fill="#efefef" />
<line x1="0" y1="565" x2="606" y2="565" stroke="#9a9a9a" stroke-width="0.9" />
<rect x="0" y="564.8" width="1.6" height="13" fill="#909090" />
<rect x="3.5" y="568.5" width="1.3" height="6" fill="#000" />
<path d="M5,571.5 l4,-3 v6 z" fill="#000" />
<path d="M18,571.5 l4,-3 v6 z" fill="#000" />
<path d="M35,571.5 l-4,-3 v6 z" fill="#000" />
<path d="M48,571.5 l-4,-3 v6 z" fill="#000" />
<rect x="48.2" y="568.5" width="1.3" height="6" fill="#000" />
<line x1="51.5" y1="565" x2="51.5" y2="577.5" stroke="#a0a0a0" stroke-width="0.8" />
<path d="M152,565 h52.8 l-5,12.6 h-48.2 z" fill="#ececec" stroke="#8a8a8a" stroke-width="0.8" />
<path d="M104,565 h52.5 l-5,12.6 h-48.3 z" fill="#ececec" stroke="#8a8a8a" stroke-width="0.8" />
<path d="M52.6,565 h52.1 l-2.7,12.6 h-43.5 z" fill="#ffffff" stroke="#8a8a8a" stroke-width="0.8" />
<rect x="53.5" y="564.3" width="50.6" height="1.5" fill="#fff" />
<text x="61.2" y="574.5" font-size="9.6" fill="#000" font-weight="bold" textLength="37.4" lengthAdjust="spacingAndGlyphs"  stroke="#000" stroke-width="0.22">Munka1</text>
<text x="112.1" y="574.5" font-size="9.6" fill="#202020" textLength="33" lengthAdjust="spacingAndGlyphs"  stroke="#202020" stroke-width="0.22">Munka2</text>
<text x="160.7" y="574.5" font-size="9.6" fill="#202020" textLength="33.3" lengthAdjust="spacingAndGlyphs"  stroke="#202020" stroke-width="0.22">Munka3</text>
<line x1="606.8" y1="565" x2="606.8" y2="577.5" stroke="#d8d8d8" stroke-width="0.8" />
<rect x="611.8" y="564.8" width="1.4" height="12.6" fill="#303030" />
<rect x="613.3" y="565" width="12.5" height="12.2" fill="#ececec" />
<line x1="626" y1="565" x2="626" y2="577.4" stroke="#8c8c8c" stroke-width="1" />
<path d="M617,571.2 l3.3,-3 v6 z" fill="#000" />
<rect x="626.5" y="565" width="339" height="12.2" fill="#e8e8e8" />
<line x1="626.5" y1="577.2" x2="966" y2="577.2" stroke="#a8a8a8" stroke-width="0.8" />
<line x1="965.8" y1="565" x2="965.8" y2="577.4" stroke="#8c8c8c" stroke-width="1" />
<rect x="966.5" y="565" width="24" height="12.2" fill="#f2f2f2" />
<rect x="991" y="565" width="12.2" height="12.2" fill="#ececec" />
<line x1="1003.2" y1="565" x2="1003.2" y2="577.4" stroke="#8c8c8c" stroke-width="1" />
<path d="M995.5,568.2 l3.3,3 l-3.3,3 z" fill="#000" />
<rect x="1009.5" y="565" width="12.8" height="12.5" fill="#eaeaea" />
<line x1="1009.8" y1="565" x2="1009.8" y2="577.4" stroke="#606060" stroke-width="1" />
<line x1="1009.8" y1="565.3" x2="1022" y2="565.3" stroke="#909090" stroke-width="0.8" />
<rect x="0" y="578" width="1024" height="23" fill="#efefef" />
<rect x="2.2" y="583.5" width="1.6" height="1.2" fill="#a8a8a8" /><rect x="2.2" y="585.9" width="1.6" height="1.2" fill="#a8a8a8" /><rect x="2.2" y="588.3" width="1.6" height="1.2" fill="#a8a8a8" /><rect x="2.2" y="590.6999999999999" width="1.6" height="1.2" fill="#a8a8a8" /><rect x="2.2" y="593.0999999999999" width="1.6" height="1.2" fill="#a8a8a8" /><rect x="2.2" y="595.4999999999999" width="1.6" height="1.2" fill="#a8a8a8" />
<text x="8.6" y="593.3" font-size="9.4" fill="#000" textLength="16.1" lengthAdjust="spacingAndGlyphs"  stroke="#000" stroke-width="0.22">Rajz</text>
<line x1="17.2" y1="595" x2="19.8" y2="595" stroke="#000" stroke-width="0.7" />
<path d="M27.0,588.0 h4.4 l-2.2,2.4 z" fill="#000" />
<path d="M41.5,583.8 v10 l2.3,-2.3 l2,4 l1.5,-0.8 l-2,-3.8 h3.4 z" fill="#fff" stroke="#606060" stroke-width="0.8" />
<line x1="55.6" y1="582" x2="55.6" y2="598" stroke="#c8c8c8" stroke-width="1" /><line x1="56.6" y1="582" x2="56.6" y2="598" stroke="#ffffff" stroke-width="1" />
<text x="61.2" y="593.3" font-size="9.4" fill="#000" textLength="40.3" lengthAdjust="spacingAndGlyphs"  stroke="#000" stroke-width="0.22">Alakzatok</text>
<line x1="71.3" y1="595" x2="75.3" y2="595" stroke="#000" stroke-width="0.7" />
<path d="M103.6,588.0 h4.4 l-2.2,2.4 z" fill="#000" />
<line x1="116" y1="586" x2="124" y2="594.5" stroke="#707070" stroke-width="1" />
<line x1="135.5" y1="586" x2="142" y2="592.5" stroke="#303030" stroke-width="1" />
<path d="M144,594.8 l-4.5,-1 l3.5,-3.5 z" fill="#303030" />
<rect x="151.5" y="585.5" width="11.8" height="9.3" fill="none" stroke="#404040" stroke-width="1" />
<ellipse cx="175.8" cy="590" rx="6.3" ry="4.4" fill="none" stroke="#505050" stroke-width="1"/>
<rect x="188.3" y="584.5" width="11.5" height="10.5" fill="#e8e8e8" stroke="#303030" stroke-width="0.9" />
<line x1="190" y1="591" x2="198" y2="591" stroke="#606060" stroke-width="0.8" />
<line x1="190" y1="593" x2="198" y2="593" stroke="#606060" stroke-width="0.8" />
<rect x="193" y="586.5" width="3" height="3" fill="#909090" />
<text x="206.5" y="595.5" font-size="13" fill="#4050b8" font-weight="bold" font-style="italic" font-family="Liberation Serif, serif" stroke="#4050b8" stroke-width="0.22">A</text>
<rect x="216" y="584.5" width="2.5" height="10" fill="#8090c8" />
<circle cx="230.8" cy="590" r="4.5" fill="none" stroke="#6868a8" stroke-width="1.2" stroke-dasharray="2.5,1.5"/>
<rect x="244.2" y="584.2" width="11.8" height="11.5" fill="#fff" stroke="#505050" stroke-width="0.8" stroke-dasharray="1,1"/>
<path d="M247,595 q0,-4 3,-4.5 q3,0.5 3,4.5 z M250,590.5 m-1.8,0 a1.8,2.2 0 1,0 3.6,0 a1.8,2.2 0 1,0 -3.6,0" fill="#c05050" />
<rect x="262.3" y="584.5" width="11.8" height="10.5" fill="#f0f0a0" stroke="#505050" stroke-width="0.9" />
<path d="M263,594.5 l4,-4 l2.5,2 l2,-1.5 l2.5,3.5 z" fill="#808070" />
<circle cx="271" cy="587.5" r="1.2" fill="#808050"/>
<line x1="279.3" y1="582" x2="279.3" y2="598" stroke="#c8c8c8" stroke-width="1" /><line x1="280.3" y1="582" x2="280.3" y2="598" stroke="#ffffff" stroke-width="1" />
<path d="M286.5,588 l3.2,-3.2 l3.2,3.2 l-3.2,3.2 z" fill="#f8f8f8" stroke="#404040" stroke-width="0.9" />
<path d="M290.5,584.8 q3,0 3,4" fill="none" stroke="#4050a0" stroke-width="1.2" />
<rect x="285" y="593.3" width="13" height="2.6" fill="#f0f020" />
<path d="M302.2,588.8 h4.4 l-2.2,2.4 z" fill="#000" />
<path d="M314,592 l8.5,-8" fill="none" stroke="#303080" stroke-width="1.8" />
<path d="M313,592.5 l2,-2" fill="none" stroke="#303030" stroke-width="1.2" />
<rect x="312" y="593.3" width="13" height="2.6" fill="#1020c0" />
<path d="M329.0,588.8 h4.4 l-2.2,2.4 z" fill="#000" />
<path d="M340.5,592 l4.8,-8.5 l4.8,8.5 M342.5,589 h5.6" fill="none" stroke="#3040a0" stroke-width="1.1" />
<rect x="339" y="593.3" width="13" height="2.6" fill="#e01818" />
<path d="M356.3,588.8 h4.4 l-2.2,2.4 z" fill="#000" />
<rect x="366" y="585.5" width="12.6" height="1.2" fill="#303030" />
<rect x="366" y="588.5" width="12.6" height="1.6" fill="#303030" />
<rect x="366" y="592" width="12.6" height="2.4" fill="#303030" />
<line x1="384.5" y1="585.5" x2="397.2" y2="585.5" stroke="#606060" stroke-width="0.9" />
<line x1="384.5" y1="588.5" x2="397.2" y2="588.5" stroke="#606060" stroke-width="0.9" stroke-dasharray="1,1"/>
<line x1="384.5" y1="591.5" x2="397.2" y2="591.5" stroke="#606060" stroke-width="0.9" stroke-dasharray="1,1"/>
<line x1="384.5" y1="594" x2="397.2" y2="594" stroke="#606060" stroke-width="0.9" stroke-dasharray="1,1"/>
<path d="M405,586.5 h11 M414,585 l2,1.5 l-2,1.5 M416,593.5 h-11 M407,592 l-2,1.5 l2,1.5" fill="none" stroke="#303030" stroke-width="1" />
<rect x="423.5" y="585" width="8.5" height="8.5" fill="#303030" />
<rect x="422" y="584" width="8.5" height="8.5" fill="#40a0a0" stroke="#205050" stroke-width="0.7" />
<path d="M440,587.5 l3,-3 h9 v8 l-3,3 h-9 z" fill="#e8e8e8" stroke="#808080" stroke-width="0.7" />
<rect x="440" y="587.5" width="9" height="8" fill="#3aa0a0" stroke="#205858" stroke-width="0.7" />
<path d="M457.8,591.3 h4.4 l-2.2,2.4 z" fill="#000" />
<rect x="0" y="601" width="1024" height="15" fill="#efefef" />
<line x1="466" y1="600.6" x2="1024" y2="600.6" stroke="#c8c8c8" stroke-width="0.8" />
<line x1="0" y1="601.3" x2="466" y2="601.3" stroke="#fafafa" stroke-width="0.8" />
<ellipse cx="23.5" cy="621" rx="10" ry="6" fill="#e4e8ec" stroke="#a8b8c8" stroke-width="1"/>
<text x="3.75" y="612.4" font-size="9.4" fill="#000" textLength="17.4" lengthAdjust="spacingAndGlyphs"  stroke="#000" stroke-width="0.22">Kész</text>
<line x1="772.9" y1="603" x2="772.9" y2="616" stroke="#e2e2e2" stroke-width="0.9" />
<line x1="800" y1="603" x2="800" y2="616" stroke="#e2e2e2" stroke-width="0.9" />
<line x1="889" y1="603" x2="889" y2="616" stroke="#e2e2e2" stroke-width="0.9" />
<line x1="910.8" y1="603" x2="910.8" y2="616" stroke="#e2e2e2" stroke-width="0.9" />
<line x1="935.3" y1="603" x2="935.3" y2="616" stroke="#e2e2e2" stroke-width="0.9" />
<line x1="957" y1="603" x2="957" y2="616" stroke="#e2e2e2" stroke-width="0.9" />
<line x1="981.7" y1="603" x2="981.7" y2="616" stroke="#e2e2e2" stroke-width="0.9" />
<line x1="1005" y1="603" x2="1005" y2="616" stroke="#e2e2e2" stroke-width="0.9" />
<g opacity="0.55" stroke="#d4d4cc" fill="none" stroke-width="1.3"><ellipse cx="873" cy="581" rx="8.5" ry="4.6" fill="#f6f6f6"/><path d="M860,590 l-3,2.5 M866,592.5 l-1,3.5 M873,593 v3.5 M880,592.5 l1,3.5 M886,590 l3,2.5 M858,576 l-4,-2.5 M862,571.5 l-2,-3 M868,569 l-1,-3.5 M874,569 l1,-3.5 M880,570.5 l2,-3 M886,574 l4,-2.5"/></g>
<text x="890" y="589" font-size="19" fill="#f4f4f4" stroke="#dadada" stroke-width="0.6" opacity="0.7" textLength="114" lengthAdjust="spacingAndGlyphs">imeedia</text>
</svg>
<svg width="1024" height="616" style="position:absolute;left:0;top:0;will-change:transform">
<rect x="24.6" y="151.5" width="971.9" height="405.8" fill="#fff" stroke="#000" stroke-width="0.9"/>
<rect x="45.7" y="171.3" width="944.6999999999999" height="347.09999999999997" fill="#ffffcc" stroke="#505050" stroke-width="0.8"/>
<line x1="45.7" x2="990.4" y1="484.20" y2="484.20" stroke="#383838" stroke-width="0.95"/>
<line x1="45.7" x2="990.4" y1="449.20" y2="449.20" stroke="#383838" stroke-width="0.95"/>
<line x1="45.7" x2="990.4" y1="414.40" y2="414.40" stroke="#383838" stroke-width="0.95"/>
<line x1="45.7" x2="990.4" y1="379.70" y2="379.70" stroke="#383838" stroke-width="0.95"/>
<line x1="45.7" x2="990.4" y1="345.00" y2="345.00" stroke="#383838" stroke-width="0.95"/>
<line x1="45.7" x2="990.4" y1="310.30" y2="310.30" stroke="#383838" stroke-width="0.95"/>
<line x1="45.7" x2="990.4" y1="275.30" y2="275.30" stroke="#383838" stroke-width="0.95"/>
<line x1="45.7" x2="990.4" y1="240.50" y2="240.50" stroke="#383838" stroke-width="0.95"/>
<line x1="45.7" x2="990.4" y1="205.80" y2="205.80" stroke="#383838" stroke-width="0.95"/>
<rect x="47.62" y="310.14" width="3.2" height="208.26" fill="#8282b6" stroke="#141428" stroke-width="0.95"/>
<rect x="50.82" y="497.57" width="2.4" height="20.83" fill="#3a1a2e" stroke="#100810" stroke-width="0.8"/>
<rect x="57.07" y="351.79" width="3.2" height="166.61" fill="#8282b6" stroke="#141428" stroke-width="0.95"/>
<rect x="60.27" y="497.57" width="2.4" height="20.83" fill="#3a1a2e" stroke="#100810" stroke-width="0.8"/>
<rect x="66.52" y="344.85" width="3.2" height="173.55" fill="#8282b6" stroke="#141428" stroke-width="0.95"/>
<rect x="69.72" y="497.57" width="2.4" height="20.83" fill="#3a1a2e" stroke="#100810" stroke-width="0.8"/>
<rect x="75.96" y="442.04" width="3.2" height="76.36" fill="#8282b6" stroke="#141428" stroke-width="0.95"/>
<rect x="79.16" y="511.46" width="2.4" height="6.94" fill="#3a1a2e" stroke="#100810" stroke-width="0.8"/>
<rect x="85.41" y="324.02" width="3.2" height="194.38" fill="#8282b6" stroke="#141428" stroke-width="0.95"/>
<rect x="88.61" y="490.63" width="2.4" height="27.77" fill="#3a1a2e" stroke="#100810" stroke-width="0.8"/>
<rect x="94.86" y="337.91" width="3.2" height="180.49" fill="#8282b6" stroke="#141428" stroke-width="0.95"/>
<rect x="98.06" y="455.92" width="2.4" height="62.48" fill="#3a1a2e" stroke="#100810" stroke-width="0.8"/>
<rect x="104.31" y="386.50" width="3.2" height="131.90" fill="#8282b6" stroke="#141428" stroke-width="0.95"/>
<rect x="107.51" y="497.57" width="2.4" height="20.83" fill="#3a1a2e" stroke="#100810" stroke-width="0.8"/>
<rect x="113.75" y="386.50" width="3.2" height="131.90" fill="#8282b6" stroke="#141428" stroke-width="0.95"/>
<rect x="116.95" y="483.69" width="2.4" height="34.71" fill="#3a1a2e" stroke="#100810" stroke-width="0.8"/>
<rect x="123.20" y="317.08" width="3.2" height="201.32" fill="#8282b6" stroke="#141428" stroke-width="0.95"/>
<rect x="126.40" y="504.52" width="2.4" height="13.88" fill="#3a1a2e" stroke="#100810" stroke-width="0.8"/>
<rect x="132.65" y="296.26" width="3.2" height="222.14" fill="#8282b6" stroke="#141428" stroke-width="0.95"/>
<rect x="135.85" y="511.46" width="2.4" height="6.94" fill="#3a1a2e" stroke="#100810" stroke-width="0.8"/>
<rect x="142.09" y="296.26" width="3.2" height="222.14" fill="#8282b6" stroke="#141428" stroke-width="0.95"/>
<rect x="145.29" y="490.63" width="2.4" height="27.77" fill="#3a1a2e" stroke="#100810" stroke-width="0.8"/>
<rect x="151.54" y="379.56" width="3.2" height="138.84" fill="#8282b6" stroke="#141428" stroke-width="0.95"/>
<rect x="154.74" y="490.63" width="2.4" height="27.77" fill="#3a1a2e" stroke="#100810" stroke-width="0.8"/>
<rect x="160.99" y="365.68" width="3.2" height="152.72" fill="#8282b6" stroke="#141428" stroke-width="0.95"/>
<rect x="164.19" y="497.57" width="2.4" height="20.83" fill="#3a1a2e" stroke="#100810" stroke-width="0.8"/>
<rect x="170.43" y="310.14" width="3.2" height="208.26" fill="#8282b6" stroke="#141428" stroke-width="0.95"/>
<rect x="173.63" y="476.75" width="2.4" height="41.65" fill="#3a1a2e" stroke="#100810" stroke-width="0.8"/>
<rect x="179.88" y="317.08" width="3.2" height="201.32" fill="#8282b6" stroke="#141428" stroke-width="0.95"/>
<rect x="183.08" y="504.52" width="2.4" height="13.88" fill="#3a1a2e" stroke="#100810" stroke-width="0.8"/>
<rect x="189.33" y="275.43" width="3.2" height="242.97" fill="#8282b6" stroke="#141428" stroke-width="0.95"/>
<rect x="192.53" y="497.57" width="2.4" height="20.83" fill="#3a1a2e" stroke="#100810" stroke-width="0.8"/>
<rect x="198.78" y="344.85" width="3.2" height="173.55" fill="#8282b6" stroke="#141428" stroke-width="0.95"/>
<rect x="201.98" y="497.57" width="2.4" height="20.83" fill="#3a1a2e" stroke="#100810" stroke-width="0.8"/>
<rect x="208.22" y="358.73" width="3.2" height="159.67" fill="#8282b6" stroke="#141428" stroke-width="0.95"/>
<rect x="211.42" y="504.52" width="2.4" height="13.88" fill="#3a1a2e" stroke="#100810" stroke-width="0.8"/>
<rect x="217.67" y="317.08" width="3.2" height="201.32" fill="#8282b6" stroke="#141428" stroke-width="0.95"/>
<rect x="220.87" y="490.63" width="2.4" height="27.77" fill="#3a1a2e" stroke="#100810" stroke-width="0.8"/>
<rect x="227.12" y="303.20" width="3.2" height="215.20" fill="#8282b6" stroke="#141428" stroke-width="0.95"/>
<rect x="230.32" y="490.63" width="2.4" height="27.77" fill="#3a1a2e" stroke="#100810" stroke-width="0.8"/>
<rect x="236.56" y="337.91" width="3.2" height="180.49" fill="#8282b6" stroke="#141428" stroke-width="0.95"/>
<rect x="239.76" y="511.46" width="2.4" height="6.94" fill="#3a1a2e" stroke="#100810" stroke-width="0.8"/>
<rect x="246.01" y="407.33" width="3.2" height="111.07" fill="#8282b6" stroke="#141428" stroke-width="0.95"/>
<rect x="249.21" y="490.63" width="2.4" height="27.77" fill="#3a1a2e" stroke="#100810" stroke-width="0.8"/>
<rect x="255.46" y="400.39" width="3.2" height="118.01" fill="#8282b6" stroke="#141428" stroke-width="0.95"/>
<rect x="258.66" y="511.46" width="2.4" height="6.94" fill="#3a1a2e" stroke="#100810" stroke-width="0.8"/>
<rect x="264.90" y="337.91" width="3.2" height="180.49" fill="#8282b6" stroke="#141428" stroke-width="0.95"/>
<rect x="268.10" y="504.52" width="2.4" height="13.88" fill="#3a1a2e" stroke="#100810" stroke-width="0.8"/>
<rect x="274.35" y="296.26" width="3.2" height="222.14" fill="#8282b6" stroke="#141428" stroke-width="0.95"/>
<rect x="277.55" y="511.46" width="2.4" height="6.94" fill="#3a1a2e" stroke="#100810" stroke-width="0.8"/>
<rect x="283.80" y="268.49" width="3.2" height="249.91" fill="#8282b6" stroke="#141428" stroke-width="0.95"/>
<rect x="287.00" y="490.63" width="2.4" height="27.77" fill="#3a1a2e" stroke="#100810" stroke-width="0.8"/>
<rect x="293.25" y="324.02" width="3.2" height="194.38" fill="#8282b6" stroke="#141428" stroke-width="0.95"/>
<rect x="296.45" y="504.52" width="2.4" height="13.88" fill="#3a1a2e" stroke="#100810" stroke-width="0.8"/>
<rect x="302.69" y="344.85" width="3.2" height="173.55" fill="#8282b6" stroke="#141428" stroke-width="0.95"/>
<rect x="305.89" y="490.63" width="2.4" height="27.77" fill="#3a1a2e" stroke="#100810" stroke-width="0.8"/>
<rect x="312.14" y="268.49" width="3.2" height="249.91" fill="#8282b6" stroke="#141428" stroke-width="0.95"/>
<rect x="315.34" y="483.69" width="2.4" height="34.71" fill="#3a1a2e" stroke="#100810" stroke-width="0.8"/>
<rect x="321.59" y="317.08" width="3.2" height="201.32" fill="#8282b6" stroke="#141428" stroke-width="0.95"/>
<rect x="324.79" y="483.69" width="2.4" height="34.71" fill="#3a1a2e" stroke="#100810" stroke-width="0.8"/>
<rect x="331.03" y="358.73" width="3.2" height="159.67" fill="#8282b6" stroke="#141428" stroke-width="0.95"/>
<rect x="334.23" y="469.81" width="2.4" height="48.59" fill="#3a1a2e" stroke="#100810" stroke-width="0.8"/>
<rect x="340.48" y="303.20" width="3.2" height="215.20" fill="#8282b6" stroke="#141428" stroke-width="0.95"/>
<rect x="343.68" y="483.69" width="2.4" height="34.71" fill="#3a1a2e" stroke="#100810" stroke-width="0.8"/>
<rect x="349.93" y="303.20" width="3.2" height="215.20" fill="#8282b6" stroke="#141428" stroke-width="0.95"/>
<rect x="353.13" y="497.57" width="2.4" height="20.83" fill="#3a1a2e" stroke="#100810" stroke-width="0.8"/>
<rect x="359.37" y="268.49" width="3.2" height="249.91" fill="#8282b6" stroke="#141428" stroke-width="0.95"/>
<rect x="362.57" y="469.81" width="2.4" height="48.59" fill="#3a1a2e" stroke="#100810" stroke-width="0.8"/>
<rect x="368.82" y="330.97" width="3.2" height="187.43" fill="#8282b6" stroke="#141428" stroke-width="0.95"/>
<rect x="372.02" y="490.63" width="2.4" height="27.77" fill="#3a1a2e" stroke="#100810" stroke-width="0.8"/>
<rect x="378.27" y="240.72" width="3.2" height="277.68" fill="#8282b6" stroke="#141428" stroke-width="0.95"/>
<rect x="381.47" y="469.81" width="2.4" height="48.59" fill="#3a1a2e" stroke="#100810" stroke-width="0.8"/>
<rect x="387.72" y="261.55" width="3.2" height="256.85" fill="#8282b6" stroke="#141428" stroke-width="0.95"/>
<rect x="390.92" y="490.63" width="2.4" height="27.77" fill="#3a1a2e" stroke="#100810" stroke-width="0.8"/>
<rect x="397.16" y="282.37" width="3.2" height="236.03" fill="#8282b6" stroke="#141428" stroke-width="0.95"/>
<rect x="400.36" y="504.52" width="2.4" height="13.88" fill="#3a1a2e" stroke="#100810" stroke-width="0.8"/>
<rect x="406.61" y="254.60" width="3.2" height="263.80" fill="#8282b6" stroke="#141428" stroke-width="0.95"/>
<rect x="409.81" y="483.69" width="2.4" height="34.71" fill="#3a1a2e" stroke="#100810" stroke-width="0.8"/>
<rect x="416.06" y="317.08" width="3.2" height="201.32" fill="#8282b6" stroke="#141428" stroke-width="0.95"/>
<rect x="419.26" y="497.57" width="2.4" height="20.83" fill="#3a1a2e" stroke="#100810" stroke-width="0.8"/>
<rect x="425.50" y="407.33" width="3.2" height="111.07" fill="#8282b6" stroke="#141428" stroke-width="0.95"/>
<rect x="428.70" y="497.57" width="2.4" height="20.83" fill="#3a1a2e" stroke="#100810" stroke-width="0.8"/>
<rect x="434.95" y="344.85" width="3.2" height="173.55" fill="#8282b6" stroke="#141428" stroke-width="0.95"/>
<rect x="438.15" y="497.57" width="2.4" height="20.83" fill="#3a1a2e" stroke="#100810" stroke-width="0.8"/>
<rect x="444.40" y="407.33" width="3.2" height="111.07" fill="#8282b6" stroke="#141428" stroke-width="0.95"/>
<rect x="447.60" y="490.63" width="2.4" height="27.77" fill="#3a1a2e" stroke="#100810" stroke-width="0.8"/>
<rect x="453.84" y="268.49" width="3.2" height="249.91" fill="#8282b6" stroke="#141428" stroke-width="0.95"/>
<rect x="457.04" y="504.52" width="2.4" height="13.88" fill="#3a1a2e" stroke="#100810" stroke-width="0.8"/>
<rect x="463.29" y="330.97" width="3.2" height="187.43" fill="#8282b6" stroke="#141428" stroke-width="0.95"/>
<rect x="466.49" y="490.63" width="2.4" height="27.77" fill="#3a1a2e" stroke="#100810" stroke-width="0.8"/>
<rect x="472.74" y="247.66" width="3.2" height="270.74" fill="#8282b6" stroke="#141428" stroke-width="0.95"/>
<rect x="475.94" y="490.63" width="2.4" height="27.77" fill="#3a1a2e" stroke="#100810" stroke-width="0.8"/>
<rect x="482.19" y="296.26" width="3.2" height="222.14" fill="#8282b6" stroke="#141428" stroke-width="0.95"/>
<rect x="485.39" y="511.46" width="2.4" height="6.94" fill="#3a1a2e" stroke="#100810" stroke-width="0.8"/>
<rect x="491.63" y="379.56" width="3.2" height="138.84" fill="#8282b6" stroke="#141428" stroke-width="0.95"/>
<rect x="501.08" y="317.08" width="3.2" height="201.32" fill="#8282b6" stroke="#141428" stroke-width="0.95"/>
<rect x="504.28" y="504.52" width="2.4" height="13.88" fill="#3a1a2e" stroke="#100810" stroke-width="0.8"/>
<rect x="510.53" y="365.68" width="3.2" height="152.72" fill="#8282b6" stroke="#141428" stroke-width="0.95"/>
<rect x="513.73" y="504.52" width="2.4" height="13.88" fill="#3a1a2e" stroke="#100810" stroke-width="0.8"/>
<rect x="519.97" y="303.20" width="3.2" height="215.20" fill="#8282b6" stroke="#141428" stroke-width="0.95"/>
<rect x="523.17" y="483.69" width="2.4" height="34.71" fill="#3a1a2e" stroke="#100810" stroke-width="0.8"/>
<rect x="529.42" y="296.26" width="3.2" height="222.14" fill="#8282b6" stroke="#141428" stroke-width="0.95"/>
<rect x="532.62" y="511.46" width="2.4" height="6.94" fill="#3a1a2e" stroke="#100810" stroke-width="0.8"/>
<rect x="538.87" y="289.31" width="3.2" height="229.09" fill="#8282b6" stroke="#141428" stroke-width="0.95"/>
<rect x="542.07" y="504.52" width="2.4" height="13.88" fill="#3a1a2e" stroke="#100810" stroke-width="0.8"/>
<rect x="548.31" y="310.14" width="3.2" height="208.26" fill="#8282b6" stroke="#141428" stroke-width="0.95"/>
<rect x="551.51" y="504.52" width="2.4" height="13.88" fill="#3a1a2e" stroke="#100810" stroke-width="0.8"/>
<rect x="557.76" y="268.49" width="3.2" height="249.91" fill="#8282b6" stroke="#141428" stroke-width="0.95"/>
<rect x="560.96" y="490.63" width="2.4" height="27.77" fill="#3a1a2e" stroke="#100810" stroke-width="0.8"/>
<rect x="567.21" y="275.43" width="3.2" height="242.97" fill="#8282b6" stroke="#141428" stroke-width="0.95"/>
<rect x="570.41" y="483.69" width="2.4" height="34.71" fill="#3a1a2e" stroke="#100810" stroke-width="0.8"/>
<rect x="576.66" y="296.26" width="3.2" height="222.14" fill="#8282b6" stroke="#141428" stroke-width="0.95"/>
<rect x="579.86" y="497.57" width="2.4" height="20.83" fill="#3a1a2e" stroke="#100810" stroke-width="0.8"/>
<rect x="586.10" y="330.97" width="3.2" height="187.43" fill="#8282b6" stroke="#141428" stroke-width="0.95"/>
<rect x="589.30" y="511.46" width="2.4" height="6.94" fill="#3a1a2e" stroke="#100810" stroke-width="0.8"/>
<rect x="595.55" y="303.20" width="3.2" height="215.20" fill="#8282b6" stroke="#141428" stroke-width="0.95"/>
<rect x="598.75" y="504.52" width="2.4" height="13.88" fill="#3a1a2e" stroke="#100810" stroke-width="0.8"/>
<rect x="605.00" y="296.26" width="3.2" height="222.14" fill="#8282b6" stroke="#141428" stroke-width="0.95"/>
<rect x="608.20" y="511.46" width="2.4" height="6.94" fill="#3a1a2e" stroke="#100810" stroke-width="0.8"/>
<rect x="614.44" y="358.73" width="3.2" height="159.67" fill="#8282b6" stroke="#141428" stroke-width="0.95"/>
<rect x="623.89" y="379.56" width="3.2" height="138.84" fill="#8282b6" stroke="#141428" stroke-width="0.95"/>
<rect x="627.09" y="490.63" width="2.4" height="27.77" fill="#3a1a2e" stroke="#100810" stroke-width="0.8"/>
<rect x="633.34" y="233.78" width="3.2" height="284.62" fill="#8282b6" stroke="#141428" stroke-width="0.95"/>
<rect x="636.54" y="462.86" width="2.4" height="55.54" fill="#3a1a2e" stroke="#100810" stroke-width="0.8"/>
<rect x="642.78" y="303.20" width="3.2" height="215.20" fill="#8282b6" stroke="#141428" stroke-width="0.95"/>
<rect x="645.98" y="504.52" width="2.4" height="13.88" fill="#3a1a2e" stroke="#100810" stroke-width="0.8"/>
<rect x="652.23" y="310.14" width="3.2" height="208.26" fill="#8282b6" stroke="#141428" stroke-width="0.95"/>
<rect x="655.43" y="504.52" width="2.4" height="13.88" fill="#3a1a2e" stroke="#100810" stroke-width="0.8"/>
<rect x="661.68" y="268.49" width="3.2" height="249.91" fill="#8282b6" stroke="#141428" stroke-width="0.95"/>
<rect x="664.88" y="448.98" width="2.4" height="69.42" fill="#3a1a2e" stroke="#100810" stroke-width="0.8"/>
<rect x="671.13" y="324.02" width="3.2" height="194.38" fill="#8282b6" stroke="#141428" stroke-width="0.95"/>
<rect x="674.33" y="476.75" width="2.4" height="41.65" fill="#3a1a2e" stroke="#100810" stroke-width="0.8"/>
<rect x="680.57" y="289.31" width="3.2" height="229.09" fill="#8282b6" stroke="#141428" stroke-width="0.95"/>
<rect x="683.77" y="504.52" width="2.4" height="13.88" fill="#3a1a2e" stroke="#100810" stroke-width="0.8"/>
<rect x="690.02" y="393.44" width="3.2" height="124.96" fill="#8282b6" stroke="#141428" stroke-width="0.95"/>
<rect x="693.22" y="490.63" width="2.4" height="27.77" fill="#3a1a2e" stroke="#100810" stroke-width="0.8"/>
<rect x="699.47" y="303.20" width="3.2" height="215.20" fill="#8282b6" stroke="#141428" stroke-width="0.95"/>
<rect x="702.67" y="428.15" width="2.4" height="90.25" fill="#3a1a2e" stroke="#100810" stroke-width="0.8"/>
<rect x="708.91" y="303.20" width="3.2" height="215.20" fill="#8282b6" stroke="#141428" stroke-width="0.95"/>
<rect x="712.11" y="504.52" width="2.4" height="13.88" fill="#3a1a2e" stroke="#100810" stroke-width="0.8"/>
<rect x="718.36" y="240.72" width="3.2" height="277.68" fill="#8282b6" stroke="#141428" stroke-width="0.95"/>
<rect x="721.56" y="469.81" width="2.4" height="48.59" fill="#3a1a2e" stroke="#100810" stroke-width="0.8"/>
<rect x="727.81" y="351.79" width="3.2" height="166.61" fill="#8282b6" stroke="#141428" stroke-width="0.95"/>
<rect x="737.25" y="344.85" width="3.2" height="173.55" fill="#8282b6" stroke="#141428" stroke-width="0.95"/>
<rect x="740.45" y="511.46" width="2.4" height="6.94" fill="#3a1a2e" stroke="#100810" stroke-width="0.8"/>
<rect x="746.70" y="192.13" width="3.2" height="326.27" fill="#8282b6" stroke="#141428" stroke-width="0.95"/>
<rect x="749.90" y="497.57" width="2.4" height="20.83" fill="#3a1a2e" stroke="#100810" stroke-width="0.8"/>
<rect x="756.15" y="310.14" width="3.2" height="208.26" fill="#8282b6" stroke="#141428" stroke-width="0.95"/>
<rect x="765.60" y="324.02" width="3.2" height="194.38" fill="#8282b6" stroke="#141428" stroke-width="0.95"/>
<rect x="768.80" y="469.81" width="2.4" height="48.59" fill="#3a1a2e" stroke="#100810" stroke-width="0.8"/>
<rect x="775.04" y="254.60" width="3.2" height="263.80" fill="#8282b6" stroke="#141428" stroke-width="0.95"/>
<rect x="778.24" y="469.81" width="2.4" height="48.59" fill="#3a1a2e" stroke="#100810" stroke-width="0.8"/>
<rect x="784.49" y="421.21" width="3.2" height="97.19" fill="#8282b6" stroke="#141428" stroke-width="0.95"/>
<rect x="787.69" y="400.39" width="2.4" height="118.01" fill="#3a1a2e" stroke="#100810" stroke-width="0.8"/>
<rect x="793.94" y="324.02" width="3.2" height="194.38" fill="#8282b6" stroke="#141428" stroke-width="0.95"/>
<rect x="797.14" y="497.57" width="2.4" height="20.83" fill="#3a1a2e" stroke="#100810" stroke-width="0.8"/>
<rect x="803.38" y="358.73" width="3.2" height="159.67" fill="#8282b6" stroke="#141428" stroke-width="0.95"/>
<rect x="806.58" y="407.33" width="2.4" height="111.07" fill="#3a1a2e" stroke="#100810" stroke-width="0.8"/>
<rect x="812.83" y="330.97" width="3.2" height="187.43" fill="#8282b6" stroke="#141428" stroke-width="0.95"/>
<rect x="816.03" y="511.46" width="2.4" height="6.94" fill="#3a1a2e" stroke="#100810" stroke-width="0.8"/>
<rect x="822.28" y="344.85" width="3.2" height="173.55" fill="#8282b6" stroke="#141428" stroke-width="0.95"/>
<rect x="825.48" y="448.98" width="2.4" height="69.42" fill="#3a1a2e" stroke="#100810" stroke-width="0.8"/>
<rect x="831.72" y="337.91" width="3.2" height="180.49" fill="#8282b6" stroke="#141428" stroke-width="0.95"/>
<rect x="834.92" y="511.46" width="2.4" height="6.94" fill="#3a1a2e" stroke="#100810" stroke-width="0.8"/>
<rect x="841.17" y="393.44" width="3.2" height="124.96" fill="#8282b6" stroke="#141428" stroke-width="0.95"/>
<rect x="844.37" y="497.57" width="2.4" height="20.83" fill="#3a1a2e" stroke="#100810" stroke-width="0.8"/>
<rect x="850.62" y="351.79" width="3.2" height="166.61" fill="#8282b6" stroke="#141428" stroke-width="0.95"/>
<rect x="853.82" y="483.69" width="2.4" height="34.71" fill="#3a1a2e" stroke="#100810" stroke-width="0.8"/>
<rect x="860.07" y="358.73" width="3.2" height="159.67" fill="#8282b6" stroke="#141428" stroke-width="0.95"/>
<rect x="863.27" y="490.63" width="2.4" height="27.77" fill="#3a1a2e" stroke="#100810" stroke-width="0.8"/>
<rect x="869.51" y="351.79" width="3.2" height="166.61" fill="#8282b6" stroke="#141428" stroke-width="0.95"/>
<rect x="872.71" y="483.69" width="2.4" height="34.71" fill="#3a1a2e" stroke="#100810" stroke-width="0.8"/>
<rect x="878.96" y="330.97" width="3.2" height="187.43" fill="#8282b6" stroke="#141428" stroke-width="0.95"/>
<rect x="882.16" y="497.57" width="2.4" height="20.83" fill="#3a1a2e" stroke="#100810" stroke-width="0.8"/>
<rect x="888.41" y="365.68" width="3.2" height="152.72" fill="#8282b6" stroke="#141428" stroke-width="0.95"/>
<rect x="891.61" y="483.69" width="2.4" height="34.71" fill="#3a1a2e" stroke="#100810" stroke-width="0.8"/>
<rect x="897.85" y="358.73" width="3.2" height="159.67" fill="#8282b6" stroke="#141428" stroke-width="0.95"/>
<rect x="907.30" y="296.26" width="3.2" height="222.14" fill="#8282b6" stroke="#141428" stroke-width="0.95"/>
<rect x="910.50" y="511.46" width="2.4" height="6.94" fill="#3a1a2e" stroke="#100810" stroke-width="0.8"/>
<rect x="916.75" y="337.91" width="3.2" height="180.49" fill="#8282b6" stroke="#141428" stroke-width="0.95"/>
<rect x="919.95" y="483.69" width="2.4" height="34.71" fill="#3a1a2e" stroke="#100810" stroke-width="0.8"/>
<rect x="926.19" y="275.43" width="3.2" height="242.97" fill="#8282b6" stroke="#141428" stroke-width="0.95"/>
<rect x="929.39" y="497.57" width="2.4" height="20.83" fill="#3a1a2e" stroke="#100810" stroke-width="0.8"/>
<rect x="935.64" y="268.49" width="3.2" height="249.91" fill="#8282b6" stroke="#141428" stroke-width="0.95"/>
<rect x="938.84" y="490.63" width="2.4" height="27.77" fill="#3a1a2e" stroke="#100810" stroke-width="0.8"/>
<rect x="945.09" y="324.02" width="3.2" height="194.38" fill="#8282b6" stroke="#141428" stroke-width="0.95"/>
<rect x="954.54" y="386.50" width="3.2" height="131.90" fill="#8282b6" stroke="#141428" stroke-width="0.95"/>
<rect x="957.74" y="497.57" width="2.4" height="20.83" fill="#3a1a2e" stroke="#100810" stroke-width="0.8"/>
<rect x="963.98" y="365.68" width="3.2" height="152.72" fill="#8282b6" stroke="#141428" stroke-width="0.95"/>
<rect x="967.18" y="504.52" width="2.4" height="13.88" fill="#3a1a2e" stroke="#100810" stroke-width="0.8"/>
<rect x="973.43" y="310.14" width="3.2" height="208.26" fill="#8282b6" stroke="#141428" stroke-width="0.95"/>
<rect x="976.63" y="511.46" width="2.4" height="6.94" fill="#3a1a2e" stroke="#100810" stroke-width="0.8"/>
<rect x="982.88" y="435.10" width="3.2" height="83.30" fill="#8282b6" stroke="#141428" stroke-width="0.95"/>
<line x1="45.7" x2="45.7" y1="171.3" y2="518.4" stroke="#000" stroke-width="1"/>
<line x1="45.7" x2="990.4" y1="518.4" y2="518.4" stroke="#000" stroke-width="1"/>
<line x1="42.5" x2="45.7" y1="518.40" y2="518.40" stroke="#000" stroke-width="1"/>
<text x="39.5" y="521.50" font-family='"Liberation Sans", sans-serif' font-size="8.6" text-anchor="end" fill="#303030" stroke="#303030" stroke-width="0.2">0</text>
<line x1="42.5" x2="45.7" y1="483.69" y2="483.69" stroke="#000" stroke-width="1"/>
<text x="39.5" y="486.79" font-family='"Liberation Sans", sans-serif' font-size="8.6" text-anchor="end" fill="#303030" stroke="#303030" stroke-width="0.2">5</text>
<line x1="42.5" x2="45.7" y1="448.98" y2="448.98" stroke="#000" stroke-width="1"/>
<text x="39.5" y="452.08" font-family='"Liberation Sans", sans-serif' font-size="8.6" text-anchor="end" fill="#303030" stroke="#303030" stroke-width="0.2">10</text>
<line x1="42.5" x2="45.7" y1="414.27" y2="414.27" stroke="#000" stroke-width="1"/>
<text x="39.5" y="417.37" font-family='"Liberation Sans", sans-serif' font-size="8.6" text-anchor="end" fill="#303030" stroke="#303030" stroke-width="0.2">15</text>
<line x1="42.5" x2="45.7" y1="379.56" y2="379.56" stroke="#000" stroke-width="1"/>
<text x="39.5" y="382.66" font-family='"Liberation Sans", sans-serif' font-size="8.6" text-anchor="end" fill="#303030" stroke="#303030" stroke-width="0.2">20</text>
<line x1="42.5" x2="45.7" y1="344.85" y2="344.85" stroke="#000" stroke-width="1"/>
<text x="39.5" y="347.95" font-family='"Liberation Sans", sans-serif' font-size="8.6" text-anchor="end" fill="#303030" stroke="#303030" stroke-width="0.2">25</text>
<line x1="42.5" x2="45.7" y1="310.14" y2="310.14" stroke="#000" stroke-width="1"/>
<text x="39.5" y="313.24" font-family='"Liberation Sans", sans-serif' font-size="8.6" text-anchor="end" fill="#303030" stroke="#303030" stroke-width="0.2">30</text>
<line x1="42.5" x2="45.7" y1="275.43" y2="275.43" stroke="#000" stroke-width="1"/>
<text x="39.5" y="278.53" font-family='"Liberation Sans", sans-serif' font-size="8.6" text-anchor="end" fill="#303030" stroke="#303030" stroke-width="0.2">35</text>
<line x1="42.5" x2="45.7" y1="240.72" y2="240.72" stroke="#000" stroke-width="1"/>
<text x="39.5" y="243.82" font-family='"Liberation Sans", sans-serif' font-size="8.6" text-anchor="end" fill="#303030" stroke="#303030" stroke-width="0.2">40</text>
<line x1="42.5" x2="45.7" y1="206.01" y2="206.01" stroke="#000" stroke-width="1"/>
<text x="39.5" y="209.11" font-family='"Liberation Sans", sans-serif' font-size="8.6" text-anchor="end" fill="#303030" stroke="#303030" stroke-width="0.2">45</text>
<line x1="42.5" x2="45.7" y1="171.30" y2="171.30" stroke="#000" stroke-width="1"/>
<text x="39.5" y="174.40" font-family='"Liberation Sans", sans-serif' font-size="8.6" text-anchor="end" fill="#303030" stroke="#303030" stroke-width="0.2">50</text>
<line x1="45.70" x2="45.70" y1="518.4" y2="521.9" stroke="#000" stroke-width="1"/>
<line x1="55.15" x2="55.15" y1="518.4" y2="521.9" stroke="#000" stroke-width="1"/>
<line x1="64.59" x2="64.59" y1="518.4" y2="521.9" stroke="#000" stroke-width="1"/>
<line x1="74.04" x2="74.04" y1="518.4" y2="521.9" stroke="#000" stroke-width="1"/>
<line x1="83.49" x2="83.49" y1="518.4" y2="521.9" stroke="#000" stroke-width="1"/>
<line x1="92.94" x2="92.94" y1="518.4" y2="521.9" stroke="#000" stroke-width="1"/>
<line x1="102.38" x2="102.38" y1="518.4" y2="521.9" stroke="#000" stroke-width="1"/>
<line x1="111.83" x2="111.83" y1="518.4" y2="521.9" stroke="#000" stroke-width="1"/>
<line x1="121.28" x2="121.28" y1="518.4" y2="521.9" stroke="#000" stroke-width="1"/>
<line x1="130.72" x2="130.72" y1="518.4" y2="521.9" stroke="#000" stroke-width="1"/>
<line x1="140.17" x2="140.17" y1="518.4" y2="521.9" stroke="#000" stroke-width="1"/>
<line x1="149.62" x2="149.62" y1="518.4" y2="521.9" stroke="#000" stroke-width="1"/>
<line x1="159.06" x2="159.06" y1="518.4" y2="521.9" stroke="#000" stroke-width="1"/>
<line x1="168.51" x2="168.51" y1="518.4" y2="521.9" stroke="#000" stroke-width="1"/>
<line x1="177.96" x2="177.96" y1="518.4" y2="521.9" stroke="#000" stroke-width="1"/>
<line x1="187.40" x2="187.40" y1="518.4" y2="521.9" stroke="#000" stroke-width="1"/>
<line x1="196.85" x2="196.85" y1="518.4" y2="521.9" stroke="#000" stroke-width="1"/>
<line x1="206.30" x2="206.30" y1="518.4" y2="521.9" stroke="#000" stroke-width="1"/>
<line x1="215.75" x2="215.75" y1="518.4" y2="521.9" stroke="#000" stroke-width="1"/>
<line x1="225.19" x2="225.19" y1="518.4" y2="521.9" stroke="#000" stroke-width="1"/>
<line x1="234.64" x2="234.64" y1="518.4" y2="521.9" stroke="#000" stroke-width="1"/>
<line x1="244.09" x2="244.09" y1="518.4" y2="521.9" stroke="#000" stroke-width="1"/>
<line x1="253.53" x2="253.53" y1="518.4" y2="521.9" stroke="#000" stroke-width="1"/>
<line x1="262.98" x2="262.98" y1="518.4" y2="521.9" stroke="#000" stroke-width="1"/>
<line x1="272.43" x2="272.43" y1="518.4" y2="521.9" stroke="#000" stroke-width="1"/>
<line x1="281.88" x2="281.88" y1="518.4" y2="521.9" stroke="#000" stroke-width="1"/>
<line x1="291.32" x2="291.32" y1="518.4" y2="521.9" stroke="#000" stroke-width="1"/>
<line x1="300.77" x2="300.77" y1="518.4" y2="521.9" stroke="#000" stroke-width="1"/>
<line x1="310.22" x2="310.22" y1="518.4" y2="521.9" stroke="#000" stroke-width="1"/>
<line x1="319.66" x2="319.66" y1="518.4" y2="521.9" stroke="#000" stroke-width="1"/>
<line x1="329.11" x2="329.11" y1="518.4" y2="521.9" stroke="#000" stroke-width="1"/>
<line x1="338.56" x2="338.56" y1="518.4" y2="521.9" stroke="#000" stroke-width="1"/>
<line x1="348.00" x2="348.00" y1="518.4" y2="521.9" stroke="#000" stroke-width="1"/>
<line x1="357.45" x2="357.45" y1="518.4" y2="521.9" stroke="#000" stroke-width="1"/>
<line x1="366.90" x2="366.90" y1="518.4" y2="521.9" stroke="#000" stroke-width="1"/>
<line x1="376.34" x2="376.34" y1="518.4" y2="521.9" stroke="#000" stroke-width="1"/>
<line x1="385.79" x2="385.79" y1="518.4" y2="521.9" stroke="#000" stroke-width="1"/>
<line x1="395.24" x2="395.24" y1="518.4" y2="521.9" stroke="#000" stroke-width="1"/>
<line x1="404.69" x2="404.69" y1="518.4" y2="521.9" stroke="#000" stroke-width="1"/>
<line x1="414.13" x2="414.13" y1="518.4" y2="521.9" stroke="#000" stroke-width="1"/>
<line x1="423.58" x2="423.58" y1="518.4" y2="521.9" stroke="#000" stroke-width="1"/>
<line x1="433.03" x2="433.03" y1="518.4" y2="521.9" stroke="#000" stroke-width="1"/>
<line x1="442.47" x2="442.47" y1="518.4" y2="521.9" stroke="#000" stroke-width="1"/>
<line x1="451.92" x2="451.92" y1="518.4" y2="521.9" stroke="#000" stroke-width="1"/>
<line x1="461.37" x2="461.37" y1="518.4" y2="521.9" stroke="#000" stroke-width="1"/>
<line x1="470.81" x2="470.81" y1="518.4" y2="521.9" stroke="#000" stroke-width="1"/>
<line x1="480.26" x2="480.26" y1="518.4" y2="521.9" stroke="#000" stroke-width="1"/>
<line x1="489.71" x2="489.71" y1="518.4" y2="521.9" stroke="#000" stroke-width="1"/>
<line x1="499.16" x2="499.16" y1="518.4" y2="521.9" stroke="#000" stroke-width="1"/>
<line x1="508.60" x2="508.60" y1="518.4" y2="521.9" stroke="#000" stroke-width="1"/>
<line x1="518.05" x2="518.05" y1="518.4" y2="521.9" stroke="#000" stroke-width="1"/>
<line x1="527.50" x2="527.50" y1="518.4" y2="521.9" stroke="#000" stroke-width="1"/>
<line x1="536.94" x2="536.94" y1="518.4" y2="521.9" stroke="#000" stroke-width="1"/>
<line x1="546.39" x2="546.39" y1="518.4" y2="521.9" stroke="#000" stroke-width="1"/>
<line x1="555.84" x2="555.84" y1="518.4" y2="521.9" stroke="#000" stroke-width="1"/>
<line x1="565.28" x2="565.28" y1="518.4" y2="521.9" stroke="#000" stroke-width="1"/>
<line x1="574.73" x2="574.73" y1="518.4" y2="521.9" stroke="#000" stroke-width="1"/>
<line x1="584.18" x2="584.18" y1="518.4" y2="521.9" stroke="#000" stroke-width="1"/>
<line x1="593.63" x2="593.63" y1="518.4" y2="521.9" stroke="#000" stroke-width="1"/>
<line x1="603.07" x2="603.07" y1="518.4" y2="521.9" stroke="#000" stroke-width="1"/>
<line x1="612.52" x2="612.52" y1="518.4" y2="521.9" stroke="#000" stroke-width="1"/>
<line x1="621.97" x2="621.97" y1="518.4" y2="521.9" stroke="#000" stroke-width="1"/>
<line x1="631.41" x2="631.41" y1="518.4" y2="521.9" stroke="#000" stroke-width="1"/>
<line x1="640.86" x2="640.86" y1="518.4" y2="521.9" stroke="#000" stroke-width="1"/>
<line x1="650.31" x2="650.31" y1="518.4" y2="521.9" stroke="#000" stroke-width="1"/>
<line x1="659.75" x2="659.75" y1="518.4" y2="521.9" stroke="#000" stroke-width="1"/>
<line x1="669.20" x2="669.20" y1="518.4" y2="521.9" stroke="#000" stroke-width="1"/>
<line x1="678.65" x2="678.65" y1="518.4" y2="521.9" stroke="#000" stroke-width="1"/>
<line x1="688.10" x2="688.10" y1="518.4" y2="521.9" stroke="#000" stroke-width="1"/>
<line x1="697.54" x2="697.54" y1="518.4" y2="521.9" stroke="#000" stroke-width="1"/>
<line x1="706.99" x2="706.99" y1="518.4" y2="521.9" stroke="#000" stroke-width="1"/>
<line x1="716.44" x2="716.44" y1="518.4" y2="521.9" stroke="#000" stroke-width="1"/>
<line x1="725.88" x2="725.88" y1="518.4" y2="521.9" stroke="#000" stroke-width="1"/>
<line x1="735.33" x2="735.33" y1="518.4" y2="521.9" stroke="#000" stroke-width="1"/>
<line x1="744.78" x2="744.78" y1="518.4" y2="521.9" stroke="#000" stroke-width="1"/>
<line x1="754.23" x2="754.23" y1="518.4" y2="521.9" stroke="#000" stroke-width="1"/>
<line x1="763.67" x2="763.67" y1="518.4" y2="521.9" stroke="#000" stroke-width="1"/>
<line x1="773.12" x2="773.12" y1="518.4" y2="521.9" stroke="#000" stroke-width="1"/>
<line x1="782.57" x2="782.57" y1="518.4" y2="521.9" stroke="#000" stroke-width="1"/>
<line x1="792.01" x2="792.01" y1="518.4" y2="521.9" stroke="#000" stroke-width="1"/>
<line x1="801.46" x2="801.46" y1="518.4" y2="521.9" stroke="#000" stroke-width="1"/>
<line x1="810.91" x2="810.91" y1="518.4" y2="521.9" stroke="#000" stroke-width="1"/>
<line x1="820.35" x2="820.35" y1="518.4" y2="521.9" stroke="#000" stroke-width="1"/>
<line x1="829.80" x2="829.80" y1="518.4" y2="521.9" stroke="#000" stroke-width="1"/>
<line x1="839.25" x2="839.25" y1="518.4" y2="521.9" stroke="#000" stroke-width="1"/>
<line x1="848.69" x2="848.69" y1="518.4" y2="521.9" stroke="#000" stroke-width="1"/>
<line x1="858.14" x2="858.14" y1="518.4" y2="521.9" stroke="#000" stroke-width="1"/>
<line x1="867.59" x2="867.59" y1="518.4" y2="521.9" stroke="#000" stroke-width="1"/>
<line x1="877.04" x2="877.04" y1="518.4" y2="521.9" stroke="#000" stroke-width="1"/>
<line x1="886.48" x2="886.48" y1="518.4" y2="521.9" stroke="#000" stroke-width="1"/>
<line x1="895.93" x2="895.93" y1="518.4" y2="521.9" stroke="#000" stroke-width="1"/>
<line x1="905.38" x2="905.38" y1="518.4" y2="521.9" stroke="#000" stroke-width="1"/>
<line x1="914.82" x2="914.82" y1="518.4" y2="521.9" stroke="#000" stroke-width="1"/>
<line x1="924.27" x2="924.27" y1="518.4" y2="521.9" stroke="#000" stroke-width="1"/>
<line x1="933.72" x2="933.72" y1="518.4" y2="521.9" stroke="#000" stroke-width="1"/>
<line x1="943.16" x2="943.16" y1="518.4" y2="521.9" stroke="#000" stroke-width="1"/>
<line x1="952.61" x2="952.61" y1="518.4" y2="521.9" stroke="#000" stroke-width="1"/>
<line x1="962.06" x2="962.06" y1="518.4" y2="521.9" stroke="#000" stroke-width="1"/>
<line x1="971.51" x2="971.51" y1="518.4" y2="521.9" stroke="#000" stroke-width="1"/>
<line x1="980.95" x2="980.95" y1="518.4" y2="521.9" stroke="#000" stroke-width="1"/>
<line x1="990.40" x2="990.40" y1="518.4" y2="521.9" stroke="#000" stroke-width="1"/>
<text transform="translate(53.02,543.4) rotate(-90)" font-family='"Liberation Sans", sans-serif' font-size="7.9" fill="#303030" stroke="#303030" stroke-width="0.2">1901</text>
<text transform="translate(71.92,543.4) rotate(-90)" font-family='"Liberation Sans", sans-serif' font-size="7.9" fill="#303030" stroke="#303030" stroke-width="0.2">1903</text>
<text transform="translate(90.81,543.4) rotate(-90)" font-family='"Liberation Sans", sans-serif' font-size="7.9" fill="#303030" stroke="#303030" stroke-width="0.2">1905</text>
<text transform="translate(109.71,543.4) rotate(-90)" font-family='"Liberation Sans", sans-serif' font-size="7.9" fill="#303030" stroke="#303030" stroke-width="0.2">1907</text>
<text transform="translate(128.60,543.4) rotate(-90)" font-family='"Liberation Sans", sans-serif' font-size="7.9" fill="#303030" stroke="#303030" stroke-width="0.2">1909</text>
<text transform="translate(147.49,543.4) rotate(-90)" font-family='"Liberation Sans", sans-serif' font-size="7.9" fill="#303030" stroke="#303030" stroke-width="0.2">1911</text>
<text transform="translate(166.39,543.4) rotate(-90)" font-family='"Liberation Sans", sans-serif' font-size="7.9" fill="#303030" stroke="#303030" stroke-width="0.2">1913</text>
<text transform="translate(185.28,543.4) rotate(-90)" font-family='"Liberation Sans", sans-serif' font-size="7.9" fill="#303030" stroke="#303030" stroke-width="0.2">1915</text>
<text transform="translate(204.18,543.4) rotate(-90)" font-family='"Liberation Sans", sans-serif' font-size="7.9" fill="#303030" stroke="#303030" stroke-width="0.2">1917</text>
<text transform="translate(223.07,543.4) rotate(-90)" font-family='"Liberation Sans", sans-serif' font-size="7.9" fill="#303030" stroke="#303030" stroke-width="0.2">1919</text>
<text transform="translate(241.96,543.4) rotate(-90)" font-family='"Liberation Sans", sans-serif' font-size="7.9" fill="#303030" stroke="#303030" stroke-width="0.2">1921</text>
<text transform="translate(260.86,543.4) rotate(-90)" font-family='"Liberation Sans", sans-serif' font-size="7.9" fill="#303030" stroke="#303030" stroke-width="0.2">1923</text>
<text transform="translate(279.75,543.4) rotate(-90)" font-family='"Liberation Sans", sans-serif' font-size="7.9" fill="#303030" stroke="#303030" stroke-width="0.2">1925</text>
<text transform="translate(298.65,543.4) rotate(-90)" font-family='"Liberation Sans", sans-serif' font-size="7.9" fill="#303030" stroke="#303030" stroke-width="0.2">1927</text>
<text transform="translate(317.54,543.4) rotate(-90)" font-family='"Liberation Sans", sans-serif' font-size="7.9" fill="#303030" stroke="#303030" stroke-width="0.2">1929</text>
<text transform="translate(336.43,543.4) rotate(-90)" font-family='"Liberation Sans", sans-serif' font-size="7.9" fill="#303030" stroke="#303030" stroke-width="0.2">1931</text>
<text transform="translate(355.33,543.4) rotate(-90)" font-family='"Liberation Sans", sans-serif' font-size="7.9" fill="#303030" stroke="#303030" stroke-width="0.2">1933</text>
<text transform="translate(374.22,543.4) rotate(-90)" font-family='"Liberation Sans", sans-serif' font-size="7.9" fill="#303030" stroke="#303030" stroke-width="0.2">1935</text>
<text transform="translate(393.12,543.4) rotate(-90)" font-family='"Liberation Sans", sans-serif' font-size="7.9" fill="#303030" stroke="#303030" stroke-width="0.2">1937</text>
<text transform="translate(412.01,543.4) rotate(-90)" font-family='"Liberation Sans", sans-serif' font-size="7.9" fill="#303030" stroke="#303030" stroke-width="0.2">1939</text>
<text transform="translate(430.90,543.4) rotate(-90)" font-family='"Liberation Sans", sans-serif' font-size="7.9" fill="#303030" stroke="#303030" stroke-width="0.2">1941</text>
<text transform="translate(449.80,543.4) rotate(-90)" font-family='"Liberation Sans", sans-serif' font-size="7.9" fill="#303030" stroke="#303030" stroke-width="0.2">1943</text>
<text transform="translate(468.69,543.4) rotate(-90)" font-family='"Liberation Sans", sans-serif' font-size="7.9" fill="#303030" stroke="#303030" stroke-width="0.2">1945</text>
<text transform="translate(487.59,543.4) rotate(-90)" font-family='"Liberation Sans", sans-serif' font-size="7.9" fill="#303030" stroke="#303030" stroke-width="0.2">1947</text>
<text transform="translate(506.48,543.4) rotate(-90)" font-family='"Liberation Sans", sans-serif' font-size="7.9" fill="#303030" stroke="#303030" stroke-width="0.2">1949</text>
<text transform="translate(525.37,543.4) rotate(-90)" font-family='"Liberation Sans", sans-serif' font-size="7.9" fill="#303030" stroke="#303030" stroke-width="0.2">1951</text>
<text transform="translate(544.27,543.4) rotate(-90)" font-family='"Liberation Sans", sans-serif' font-size="7.9" fill="#303030" stroke="#303030" stroke-width="0.2">1953</text>
<text transform="translate(563.16,543.4) rotate(-90)" font-family='"Liberation Sans", sans-serif' font-size="7.9" fill="#303030" stroke="#303030" stroke-width="0.2">1955</text>
<text transform="translate(582.06,543.4) rotate(-90)" font-family='"Liberation Sans", sans-serif' font-size="7.9" fill="#303030" stroke="#303030" stroke-width="0.2">1957</text>
<text transform="translate(600.95,543.4) rotate(-90)" font-family='"Liberation Sans", sans-serif' font-size="7.9" fill="#303030" stroke="#303030" stroke-width="0.2">1959</text>
<text transform="translate(619.84,543.4) rotate(-90)" font-family='"Liberation Sans", sans-serif' font-size="7.9" fill="#303030" stroke="#303030" stroke-width="0.2">1961</text>
<text transform="translate(638.74,543.4) rotate(-90)" font-family='"Liberation Sans", sans-serif' font-size="7.9" fill="#303030" stroke="#303030" stroke-width="0.2">1963</text>
<text transform="translate(657.63,543.4) rotate(-90)" font-family='"Liberation Sans", sans-serif' font-size="7.9" fill="#303030" stroke="#303030" stroke-width="0.2">1965</text>
<text transform="translate(676.53,543.4) rotate(-90)" font-family='"Liberation Sans", sans-serif' font-size="7.9" fill="#303030" stroke="#303030" stroke-width="0.2">1967</text>
<text transform="translate(695.42,543.4) rotate(-90)" font-family='"Liberation Sans", sans-serif' font-size="7.9" fill="#303030" stroke="#303030" stroke-width="0.2">1969</text>
<text transform="translate(714.31,543.4) rotate(-90)" font-family='"Liberation Sans", sans-serif' font-size="7.9" fill="#303030" stroke="#303030" stroke-width="0.2">1971</text>
<text transform="translate(733.21,543.4) rotate(-90)" font-family='"Liberation Sans", sans-serif' font-size="7.9" fill="#303030" stroke="#303030" stroke-width="0.2">1973</text>
<text transform="translate(752.10,543.4) rotate(-90)" font-family='"Liberation Sans", sans-serif' font-size="7.9" fill="#303030" stroke="#303030" stroke-width="0.2">1975</text>
<text transform="translate(771.00,543.4) rotate(-90)" font-family='"Liberation Sans", sans-serif' font-size="7.9" fill="#303030" stroke="#303030" stroke-width="0.2">1977</text>
<text transform="translate(789.89,543.4) rotate(-90)" font-family='"Liberation Sans", sans-serif' font-size="7.9" fill="#303030" stroke="#303030" stroke-width="0.2">1979</text>
<text transform="translate(808.78,543.4) rotate(-90)" font-family='"Liberation Sans", sans-serif' font-size="7.9" fill="#303030" stroke="#303030" stroke-width="0.2">1981</text>
<text transform="translate(827.68,543.4) rotate(-90)" font-family='"Liberation Sans", sans-serif' font-size="7.9" fill="#303030" stroke="#303030" stroke-width="0.2">1983</text>
<text transform="translate(846.57,543.4) rotate(-90)" font-family='"Liberation Sans", sans-serif' font-size="7.9" fill="#303030" stroke="#303030" stroke-width="0.2">1985</text>
<text transform="translate(865.47,543.4) rotate(-90)" font-family='"Liberation Sans", sans-serif' font-size="7.9" fill="#303030" stroke="#303030" stroke-width="0.2">1987</text>
<text transform="translate(884.36,543.4) rotate(-90)" font-family='"Liberation Sans", sans-serif' font-size="7.9" fill="#303030" stroke="#303030" stroke-width="0.2">1989</text>
<text transform="translate(903.25,543.4) rotate(-90)" font-family='"Liberation Sans", sans-serif' font-size="7.9" fill="#303030" stroke="#303030" stroke-width="0.2">1991</text>
<text transform="translate(922.15,543.4) rotate(-90)" font-family='"Liberation Sans", sans-serif' font-size="7.9" fill="#303030" stroke="#303030" stroke-width="0.2">1993</text>
<text transform="translate(941.04,543.4) rotate(-90)" font-family='"Liberation Sans", sans-serif' font-size="7.9" fill="#303030" stroke="#303030" stroke-width="0.2">1995</text>
<text transform="translate(959.94,543.4) rotate(-90)" font-family='"Liberation Sans", sans-serif' font-size="7.9" fill="#303030" stroke="#303030" stroke-width="0.2">1997</text>
<text transform="translate(978.83,543.4) rotate(-90)" font-family='"Liberation Sans", sans-serif' font-size="7.9" fill="#303030" stroke="#303030" stroke-width="0.2">1999</text>
<rect x="44.9" y="155.5" width="177.7" height="39" fill="#fff" stroke="#303030" stroke-width="0.9"/>
<rect x="58" y="162.8" width="4.6" height="4.6" fill="#9999ff" stroke="#000" stroke-width="0.7"/>
<text x="66" y="168.2" font-family='"Liberation Sans", sans-serif' font-size="8.7" fill="#202020" stroke="#202020" stroke-width="0.2">Budapest zivataros napok száma</text>
<rect x="58" y="182.3" width="4.6" height="4.6" fill="#993366" stroke="#000" stroke-width="0.7"/>
<text x="66" y="187.8" font-family='"Liberation Sans", sans-serif' font-size="8.7" fill="#202020" stroke="#202020" stroke-width="0.2">Budapest jeges/jégesős napok száma</text>
<rect x="696.5" y="162.3" width="142.2" height="390.7" fill="rgb(206,170,248)" fill-opacity="0.41" stroke="#303030" stroke-width="0.9"/>
</svg>
</body></html>
